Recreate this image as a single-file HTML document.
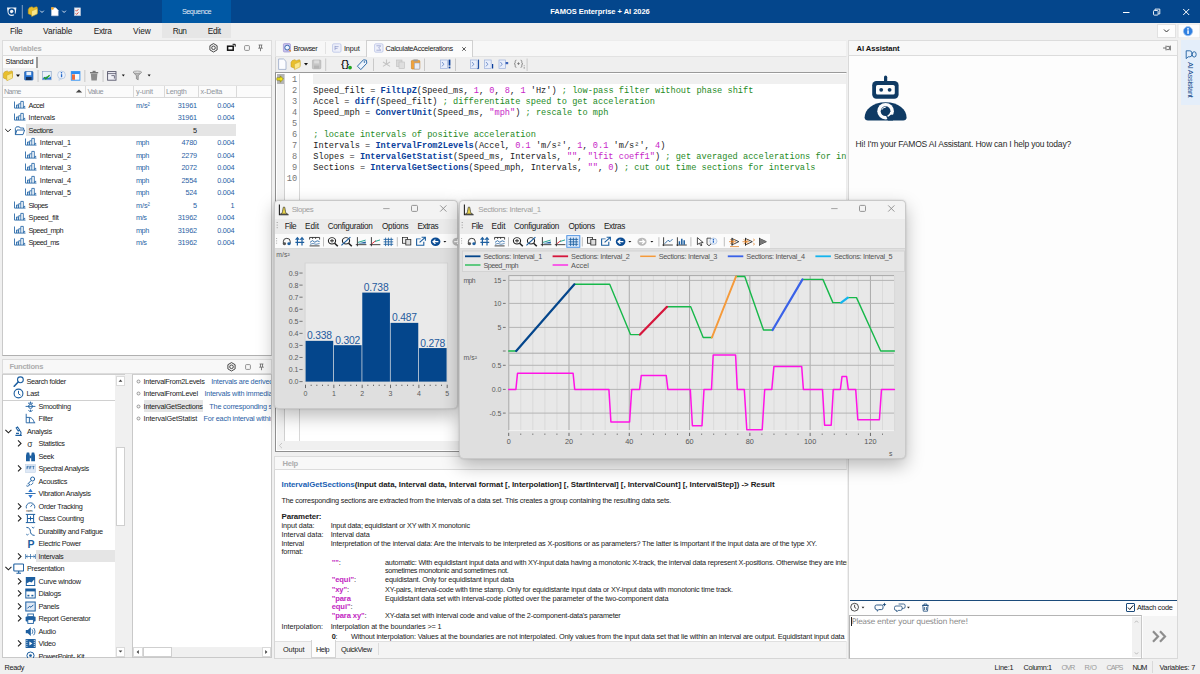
<!DOCTYPE html>
<html lang="en">
<head>
<meta charset="utf-8">
<title>FAMOS Enterprise + AI 2026</title>
<style>
*{box-sizing:border-box;margin:0;padding:0}
html,body{width:1200px;height:674px;overflow:hidden;background:#f0f0f0;font-family:"Liberation Sans",sans-serif;font-size:7.3px;color:#1a1a1a}
#root{position:relative;width:1200px;height:674px;overflow:hidden;background:#f0f0f0}
#root div,#root svg{position:absolute}
.t{white-space:nowrap;line-height:10px;font-size:7.3px;letter-spacing:-0.3px;color:#1a1a1a}
.b{color:#2a5fa5}
.r{text-align:right}
.m{font-size:8.8px;line-height:12px;top:26px;color:#1a1a1a;white-space:nowrap;letter-spacing:-0.25px}
.hdr{background:#f8f8f8;border:1px solid #dcdcdc}
.hdrt{font-size:8px;font-weight:bold;color:#adadad;white-space:nowrap;line-height:11px;letter-spacing:-0.15px}
.w{background:#fff}
.code{font-family:"Liberation Mono",monospace;font-size:8.63px;line-height:11px;white-space:pre;color:#222;left:313px;letter-spacing:0}
.code b{color:#0b3f9c;font-weight:bold}
.code i{color:#c724c7;font-style:normal}
.code u{color:#1e8a1e;text-decoration:none}
.ln{font-family:"Liberation Mono",monospace;font-size:8.63px;line-height:11px;color:#777;left:285px;width:14px;text-align:right}
.wm{font-size:8.3px;line-height:11px;white-space:nowrap;color:#1a1a1a;letter-spacing:-0.15px}
.ax{font-size:7.3px;line-height:9px;color:#555;white-space:nowrap}
.h{font-size:7.6px;line-height:10px;white-space:nowrap;color:#1a1a1a;letter-spacing:-0.17px}
.h b{font-weight:bold}
.pk{color:#c21fc2;font-weight:bold}
</style>
</head>
<body>
<div id="root">
<!-- TITLE BAR -->
<div style="left:0;top:0;width:1200px;height:23px;background:#04468c"></div>
<div style="left:162px;top:0;width:69px;height:23px;background:#0058a4"></div>
<svg style="left:0;top:0" width="100" height="23" viewBox="0 0 100 23">
 <path d="M7 7.400h9.400l-.5 4.400a4.200 4.200 0 0 1-8.400 0z" fill="#eef2f8"/>
 <circle cx="11.700" cy="11.500" r="2.500" fill="none" stroke="#04468c" stroke-width="1.500"/>
 <path d="M12.800 12.600l2.400 2.200" stroke="#04468c" stroke-width="1.400"/>
 <rect x="21.800" y="5" width="1" height="13.500" fill="#7f9fc4"/>
 <path d="M28.2 9.4l1.200-1.800 2.600-.900 1.400 1 3-1 .900.500v5.400l-5.600 2.700-3.500-1.500z" fill="#e9bf2c" stroke="#b8901a" stroke-width=".5"/><path d="M31.5 11.1l5.800-2.500v5.300l-5.600 2.700z" fill="#fbe78a" stroke="#c8a21e" stroke-width=".5"/>
 <path d="M40.200 10.700l1.800 1.800 1.800-1.800" fill="none" stroke="#d7e2f0" stroke-width="1"/>
 <path d="M51.500 7.800h4.300l2.400 2.400v5.600h-6.700z" fill="#fff" stroke="#cfd8e6" stroke-width=".5"/>
 <circle cx="52.400" cy="8.400" r="1.400" fill="#f5a623"/>
 <path d="M62.300 10.700l1.800 1.800 1.800-1.800" fill="none" stroke="#d7e2f0" stroke-width="1"/>
 <rect x="74.300" y="7.800" width="6.400" height="8" fill="#e9edf3" stroke="#9fb2cc" stroke-width=".5"/>
 <path d="M75.600 10.200l1 1 1.800-2M75.600 13.400l1 1 1.800-2" fill="none" stroke="#d03a2b" stroke-width=".9"/>
</svg>
<div style="top:7px;font-size:7.3px;line-height:10px;letter-spacing:-0.472px;white-space:nowrap;left:181.9px;color:#e3ecf6;">Sequence</div>
<div style="top:7px;font-size:7.5px;line-height:10px;letter-spacing:-0.034px;white-space:nowrap;left:550.2px;font-weight:bold;color:#fff;">FAMOS Enterprise + AI 2026</div>
<svg style="left:1110px;top:0" width="90" height="23" viewBox="0 0 90 23">
 <path d="M13 12.500h6.500" stroke="#fff" stroke-width="1"/>
 <rect x="43.500" y="10.500" width="4.600" height="4.600" fill="none" stroke="#fff" stroke-width=".9" rx=".8"/>
 <path d="M45 10.300v-1.200h4.800v4.800h-1.500" fill="none" stroke="#fff" stroke-width=".9"/>
 <path d="M73.200 9l6 6M79.200 9l-6 6" stroke="#fff" stroke-width="1"/>
</svg>
<!-- MENU BAR -->
<div style="left:162px;top:23px;width:69px;height:15px;background:#e6e6e6"></div>
<div style="top:25px;font-size:8.3px;line-height:12px;letter-spacing:-0.218px;white-space:nowrap;left:10px;">File</div>
<div style="top:25px;font-size:8.3px;line-height:12px;letter-spacing:-0.086px;white-space:nowrap;left:43.1px;">Variable</div>
<div style="top:25px;font-size:8.3px;line-height:12px;letter-spacing:-0.304px;white-space:nowrap;left:93.75px;">Extra</div>
<div style="top:25px;font-size:8.3px;line-height:12px;letter-spacing:-0.085px;white-space:nowrap;left:133.1px;">View</div>
<div style="top:25px;font-size:8.3px;line-height:12px;letter-spacing:-0.575px;white-space:nowrap;left:172.75px;">Run</div>
<div style="top:25px;font-size:8.3px;line-height:12px;letter-spacing:-0.363px;white-space:nowrap;left:207.75px;">Edit</div>
<div style="left:1157px;top:24px;width:19px;height:14px;background:#fdfdfd;border:1px solid #e1e1e1"></div>
<svg style="left:1157px;top:24px" width="43" height="14" viewBox="0 0 43 14">
 <path d="M7 5.500l2.500 2.500 2.500-2.500" fill="none" stroke="#333" stroke-width="1"/>
 <rect x="21" y="0" width="22" height="14" fill="#fdfdfd" stroke="#e1e1e1" stroke-width="1"/>
 <circle cx="31" cy="7.200" r="4.600" fill="#2f7fe0" stroke="#9ec3ef" stroke-width=".8"/>
 <rect x="30.300" y="6.300" width="1.500" height="3.600" fill="#fff"/><circle cx="31" cy="4.800" r=".9" fill="#fff"/>
</svg>
<!-- LEFT: VARIABLES PANEL -->
<div style="left:2px;top:40px;width:270px;height:316px;background:#f0f0f0;border:1px solid #d6d6d6"></div>
<div style="left:2px;top:40px;width:270px;height:15.500px;background:#f8f8f8;border:1px solid #dcdcdc"></div>
<div style="top:44px;font-size:7.6px;line-height:10px;letter-spacing:-0.131px;white-space:nowrap;left:9.4px;font-weight:bold;color:#adadad;">Variables</div>
<svg style="left:205px;top:41px" width="65" height="14" viewBox="0 0 65 14"><path d="M8.500 2.600l3.600 2.100v4.200l-3.600 2.100-3.600-2.100V4.700z" fill="none" stroke="#333" stroke-width=".9"/><circle cx="8.500" cy="6.800" r="1.800" fill="none" stroke="#333" stroke-width=".9"/>
 <rect x="22.600" y="5.200" width="5.600" height="4" fill="none" stroke="#111" stroke-width="1.500"/>
 <path d="M27.600 3.300h2.600v2.400" fill="none" stroke="#111" stroke-width="1"/>
 <rect x="39.600" y="4.600" width="4.800" height="4.800" rx=".8" fill="none" stroke="#777" stroke-width=".8"/>
 <path d="M53.600 4h3.800M54.500 4v3M56.500 4v3M53.200 7.200h4.600M55.500 7.200v3" fill="none" stroke="#666" stroke-width=".8"/>
</svg>
<div style="left:3px;top:56px;width:33px;height:12px;background:#fbfbfb"></div>
<div style="left:36.200px;top:57px;width:1.500px;height:11px;background:#9a9a9a"></div>
<div style="top:57px;font-size:7.3px;line-height:10px;letter-spacing:-0.253px;white-space:nowrap;left:5.6px;">Standard</div>
<svg style="left:2px;top:68px" width="160" height="16" viewBox="0 0 160 16">
 <path d="M1.4 5.6l1.200-1.800 2.600-.900 1.400 1 3-1 .900.500v5.400l-5.600 2.700-3.500-1.500z" fill="#e9bf2c" stroke="#b8901a" stroke-width=".5"/><path d="M4.699999999999999 7.3l5.800-2.500v5.300l-5.600 2.700z" fill="#fbe78a" stroke="#c8a21e" stroke-width=".5"/>
 <path d="M14 6.500h4l-2 2.400z" fill="#111"/>
 <rect x="22.600" y="3.500" width="8.400" height="8.600" rx=".8" fill="#2b78d6" stroke="#1a4f97" stroke-width=".6"/>
 <rect x="24.400" y="3.800" width="4.800" height="3.400" fill="#e8f0fb"/><rect x="24" y="9" width="5.600" height="3" fill="#16325c"/>
 <rect x="35.600" y="2" width=".9" height="12" fill="#c4c4c4"/>
 <rect x="40.600" y="3.600" width="8.600" height="8.200" fill="#eaf1fa" stroke="#7d9ac0" stroke-width=".6"/>
 <path d="M40.800 11.600h8.200v-3l-2.400 1.400-2-1.600-3.800 1.600z" fill="#2b78d6"/>
 <path d="M42 9.200l1.800 1.600 3.800-3.600" fill="none" stroke="#22a022" stroke-width="1.400"/>
 <circle cx="59.500" cy="7" r="3.900" fill="#eef3fb" stroke="#a9bfdc" stroke-width=".7"/>
 <path d="M57.500 10.200l-.6 2.200 2.400-1.600z" fill="#eef3fb" stroke="#a9bfdc" stroke-width=".5"/>
 <rect x="58.900" y="6.200" width="1.300" height="3" fill="#2468c8"/><circle cx="59.500" cy="4.800" r=".8" fill="#2468c8"/>
 <rect x="69.300" y="3.600" width="8.600" height="8.600" fill="#f6f8fb" stroke="#2b8cf0" stroke-width=".9"/>
 <rect x="69.300" y="3.600" width="8.600" height="2.400" fill="#2b8cf0"/><rect x="70" y="6.400" width="3" height="5.400" fill="#ea6a3a"/>
 <rect x="82.400" y="2" width=".9" height="12" fill="#c4c4c4"/>
 <path d="M88.800 5.400h6.600l-.6 7h-5.400z" fill="#8c8c8c"/><rect x="88" y="4" width="8.200" height="1.300" fill="#777"/><rect x="90.600" y="2.800" width="3" height="1.200" fill="#777"/>
 <rect x="100.600" y="2" width=".9" height="12" fill="#c4c4c4"/>
 <rect x="105.600" y="3.600" width="8.400" height="8.600" fill="#f0f0f6" stroke="#55556a" stroke-width=".9"/>
 <path d="M105.600 5.600h8.400M109.400 7.600h3v3" fill="none" stroke="#55556a" stroke-width=".8"/>
 <path d="M119.800 6.600h3l-1.500 1.800z" fill="#111"/>
 <path d="M131.200 4.200h8.200l-3.200 3.600v4l-1.800-1v-3z" fill="#b9b9b9" stroke="#6a6a6a" stroke-width=".6"/>
 <ellipse cx="135.300" cy="4.200" rx="4.100" ry="1.200" fill="#e4e4e4" stroke="#6a6a6a" stroke-width=".5"/>
 <path d="M145.600 6.600h3l-1.500 1.800z" fill="#111"/>
</svg>
<div style="left:2px;top:85px;width:270px;height:271px;background:#fff;border:1px solid #c9c9c9;border-top:none;border-bottom:1.500px solid #b0b0b0"></div>
<div style="left:3px;top:85px;width:268px;height:13px;background:#fbfbfb;border-top:1px solid #e3e3e3;border-bottom:1px solid #d9d9d9"></div>
<div style="left:85px;top:86px;width:1.300px;height:11px;background:#dadada"></div>
<div style="left:132.8px;top:86px;width:1.300px;height:11px;background:#dadada"></div>
<div style="left:163.5px;top:86px;width:1.300px;height:11px;background:#dadada"></div>
<div style="left:198px;top:86px;width:1.300px;height:11px;background:#dadada"></div>
<div style="left:236px;top:86px;width:1.300px;height:11px;background:#dadada"></div>
<div style="top:87px;font-size:7.3px;line-height:10px;letter-spacing:-0.718px;white-space:nowrap;left:4px;color:#90959c;">Name</div>
<div style="top:87px;font-size:7.3px;line-height:10px;letter-spacing:-0.506px;white-space:nowrap;left:87.5px;color:#90959c;">Value</div>
<div style="top:87px;font-size:7.3px;line-height:10px;letter-spacing:-0.158px;white-space:nowrap;left:136px;color:#90959c;">y-unit</div>
<div style="top:87px;font-size:7.3px;line-height:10px;letter-spacing:-0.304px;white-space:nowrap;left:166px;color:#90959c;">Length</div>
<div style="top:87px;font-size:7.3px;line-height:10px;letter-spacing:-0.217px;white-space:nowrap;left:200.6px;color:#90959c;">x-Delta</div>
<svg style="left:75px;top:88px" width="8" height="6" viewBox="0 0 8 6"><path d="M.8 4.600L4 1.400l3.200 3.200z" fill="#444"/></svg>
<div style="left:26px;top:124px;width:210px;height:12px;background:#e5e5e5"></div>
<svg style="left:13.9px;top:99.4px" width="13" height="11" viewBox="0 0 13 11"><path d="M.5 2.500v6.600h11M2.500 9V6h1.700v3M4.700 9V4.800h1.900M6.800 9V2.400h2.500V9M9.900 9V7.400h1.300" fill="none" stroke="#2163a5" stroke-width=".85"/></svg>
<div style="top:101px;font-size:7.3px;line-height:10px;letter-spacing:-0.49px;white-space:nowrap;left:28.5px;">Accel</div>
<div style="top:101px;font-size:7.3px;line-height:10px;letter-spacing:-0.047px;white-space:nowrap;left:136px;color:#2a5fa5;">m/s²</div>
<div style="top:101px;font-size:7.3px;line-height:10px;letter-spacing:-0.28px;white-space:nowrap;left:97px;width:99.72px;text-align:right;color:#2a5fa5;">31961</div>
<div style="top:101px;font-size:7.3px;line-height:10px;letter-spacing:-0.28px;white-space:nowrap;left:134.5px;width:99.72px;text-align:right;color:#2a5fa5;">0.004</div>
<svg style="left:13.9px;top:111.4px" width="13" height="11" viewBox="0 0 13 11"><path d="M.5 2.500v6.600h11M2.500 9V6h1.700v3M4.700 9V4.800h1.900M6.800 9V2.400h2.500V9M9.900 9V7.400h1.300" fill="none" stroke="#2163a5" stroke-width=".85"/></svg>
<div style="top:113px;font-size:7.3px;line-height:10px;letter-spacing:-0.11px;white-space:nowrap;left:28.5px;">Intervals</div>
<div style="top:113px;font-size:7.3px;line-height:10px;letter-spacing:-0.28px;white-space:nowrap;left:97px;width:99.72px;text-align:right;color:#2a5fa5;">31961</div>
<div style="top:113px;font-size:7.3px;line-height:10px;letter-spacing:-0.28px;white-space:nowrap;left:134.5px;width:99.72px;text-align:right;color:#2a5fa5;">0.004</div>
<svg style="left:4px;top:124.5px" width="22" height="11" viewBox="0 0 22 11"><path d="M1.200 4l2.800 2.800L6.800 4" fill="none" stroke="#222" stroke-width="1"/><path d="M11.400 9.600V3.400l1-1.600h3l.8 1.200h3.400v1.600M11.400 9.600l1.600-4.600h7.600l-1.600 4.600z" fill="none" stroke="#1d5fa0" stroke-width=".9"/></svg>
<div style="top:126px;font-size:7.3px;line-height:10px;letter-spacing:-0.475px;white-space:nowrap;left:28.5px;">Sections</div>
<div style="top:126px;font-size:7.3px;line-height:10px;letter-spacing:-0.28px;white-space:nowrap;left:97px;width:99.72px;text-align:right;color:#1a1a1a;">5</div>
<svg style="left:25.1px;top:136.4px" width="13" height="11" viewBox="0 0 13 11"><path d="M.5 2.500v6.600h11M2.500 9V6h1.700v3M4.700 9V4.800h1.900M6.800 9V2.400h2.500V9M9.900 9V7.400h1.300" fill="none" stroke="#2163a5" stroke-width=".85"/></svg>
<div style="top:138px;font-size:7.3px;line-height:10px;letter-spacing:-0.096px;white-space:nowrap;left:39.8px;">Interval_1</div>
<div style="top:138px;font-size:7.3px;line-height:10px;letter-spacing:-0.483px;white-space:nowrap;left:136px;color:#2a5fa5;">mph</div>
<div style="top:138px;font-size:7.3px;line-height:10px;letter-spacing:-0.28px;white-space:nowrap;left:97px;width:99.72px;text-align:right;color:#2a5fa5;">4780</div>
<div style="top:138px;font-size:7.3px;line-height:10px;letter-spacing:-0.28px;white-space:nowrap;left:134.5px;width:99.72px;text-align:right;color:#2a5fa5;">0.004</div>
<svg style="left:25.1px;top:149.4px" width="13" height="11" viewBox="0 0 13 11"><path d="M.5 2.500v6.600h11M2.500 9V6h1.700v3M4.700 9V4.800h1.900M6.800 9V2.400h2.500V9M9.900 9V7.400h1.300" fill="none" stroke="#2163a5" stroke-width=".85"/></svg>
<div style="top:151px;font-size:7.3px;line-height:10px;letter-spacing:-0.096px;white-space:nowrap;left:39.8px;">Interval_2</div>
<div style="top:151px;font-size:7.3px;line-height:10px;letter-spacing:-0.483px;white-space:nowrap;left:136px;color:#2a5fa5;">mph</div>
<div style="top:151px;font-size:7.3px;line-height:10px;letter-spacing:-0.28px;white-space:nowrap;left:97px;width:99.72px;text-align:right;color:#2a5fa5;">2279</div>
<div style="top:151px;font-size:7.3px;line-height:10px;letter-spacing:-0.28px;white-space:nowrap;left:134.5px;width:99.72px;text-align:right;color:#2a5fa5;">0.004</div>
<svg style="left:25.1px;top:161.4px" width="13" height="11" viewBox="0 0 13 11"><path d="M.5 2.500v6.600h11M2.500 9V6h1.700v3M4.700 9V4.800h1.900M6.800 9V2.400h2.500V9M9.900 9V7.400h1.300" fill="none" stroke="#2163a5" stroke-width=".85"/></svg>
<div style="top:163px;font-size:7.3px;line-height:10px;letter-spacing:-0.096px;white-space:nowrap;left:39.8px;">Interval_3</div>
<div style="top:163px;font-size:7.3px;line-height:10px;letter-spacing:-0.483px;white-space:nowrap;left:136px;color:#2a5fa5;">mph</div>
<div style="top:163px;font-size:7.3px;line-height:10px;letter-spacing:-0.28px;white-space:nowrap;left:97px;width:99.72px;text-align:right;color:#2a5fa5;">2072</div>
<div style="top:163px;font-size:7.3px;line-height:10px;letter-spacing:-0.28px;white-space:nowrap;left:134.5px;width:99.72px;text-align:right;color:#2a5fa5;">0.004</div>
<svg style="left:25.1px;top:174.4px" width="13" height="11" viewBox="0 0 13 11"><path d="M.5 2.500v6.600h11M2.500 9V6h1.700v3M4.700 9V4.800h1.900M6.800 9V2.400h2.500V9M9.900 9V7.400h1.300" fill="none" stroke="#2163a5" stroke-width=".85"/></svg>
<div style="top:176px;font-size:7.3px;line-height:10px;letter-spacing:-0.096px;white-space:nowrap;left:39.8px;">Interval_4</div>
<div style="top:176px;font-size:7.3px;line-height:10px;letter-spacing:-0.483px;white-space:nowrap;left:136px;color:#2a5fa5;">mph</div>
<div style="top:176px;font-size:7.3px;line-height:10px;letter-spacing:-0.28px;white-space:nowrap;left:97px;width:99.72px;text-align:right;color:#2a5fa5;">2554</div>
<div style="top:176px;font-size:7.3px;line-height:10px;letter-spacing:-0.28px;white-space:nowrap;left:134.5px;width:99.72px;text-align:right;color:#2a5fa5;">0.004</div>
<svg style="left:25.1px;top:186.4px" width="13" height="11" viewBox="0 0 13 11"><path d="M.5 2.500v6.600h11M2.500 9V6h1.700v3M4.700 9V4.800h1.900M6.800 9V2.400h2.500V9M9.900 9V7.400h1.300" fill="none" stroke="#2163a5" stroke-width=".85"/></svg>
<div style="top:188px;font-size:7.3px;line-height:10px;letter-spacing:-0.096px;white-space:nowrap;left:39.8px;">Interval_5</div>
<div style="top:188px;font-size:7.3px;line-height:10px;letter-spacing:-0.483px;white-space:nowrap;left:136px;color:#2a5fa5;">mph</div>
<div style="top:188px;font-size:7.3px;line-height:10px;letter-spacing:-0.28px;white-space:nowrap;left:97px;width:99.72px;text-align:right;color:#2a5fa5;">524</div>
<div style="top:188px;font-size:7.3px;line-height:10px;letter-spacing:-0.28px;white-space:nowrap;left:134.5px;width:99.72px;text-align:right;color:#2a5fa5;">0.004</div>
<svg style="left:13.9px;top:199.4px" width="13" height="11" viewBox="0 0 13 11"><path d="M.5 2.500v6.600h11M2.500 9V6h1.700v3M4.700 9V4.800h1.900M6.800 9V2.400h2.500V9M9.900 9V7.400h1.300" fill="none" stroke="#2163a5" stroke-width=".85"/></svg>
<div style="top:201px;font-size:7.3px;line-height:10px;letter-spacing:-0.553px;white-space:nowrap;left:28.5px;">Slopes</div>
<div style="top:201px;font-size:7.3px;line-height:10px;letter-spacing:-0.047px;white-space:nowrap;left:136px;color:#2a5fa5;">m/s²</div>
<div style="top:201px;font-size:7.3px;line-height:10px;letter-spacing:-0.28px;white-space:nowrap;left:97px;width:99.72px;text-align:right;color:#2a5fa5;">5</div>
<div style="top:201px;font-size:7.3px;line-height:10px;letter-spacing:-0.28px;white-space:nowrap;left:134.5px;width:99.72px;text-align:right;color:#2a5fa5;">1</div>
<svg style="left:13.9px;top:211.4px" width="13" height="11" viewBox="0 0 13 11"><path d="M.5 2.500v6.600h11M2.500 9V6h1.700v3M4.700 9V4.800h1.900M6.800 9V2.400h2.500V9M9.900 9V7.400h1.300" fill="none" stroke="#2163a5" stroke-width=".85"/></svg>
<div style="top:213px;font-size:7.3px;line-height:10px;letter-spacing:-0.237px;white-space:nowrap;left:28.5px;">Speed_filt</div>
<div style="top:213px;font-size:7.3px;line-height:10px;letter-spacing:-0.386px;white-space:nowrap;left:136px;color:#2a5fa5;">m/s</div>
<div style="top:213px;font-size:7.3px;line-height:10px;letter-spacing:-0.28px;white-space:nowrap;left:97px;width:99.72px;text-align:right;color:#2a5fa5;">31962</div>
<div style="top:213px;font-size:7.3px;line-height:10px;letter-spacing:-0.28px;white-space:nowrap;left:134.5px;width:99.72px;text-align:right;color:#2a5fa5;">0.004</div>
<svg style="left:13.9px;top:224.4px" width="13" height="11" viewBox="0 0 13 11"><path d="M.5 2.500v6.600h11M2.500 9V6h1.700v3M4.700 9V4.800h1.900M6.800 9V2.400h2.500V9M9.900 9V7.400h1.300" fill="none" stroke="#2163a5" stroke-width=".85"/></svg>
<div style="top:226px;font-size:7.3px;line-height:10px;letter-spacing:-0.53px;white-space:nowrap;left:28.5px;">Speed_mph</div>
<div style="top:226px;font-size:7.3px;line-height:10px;letter-spacing:-0.483px;white-space:nowrap;left:136px;color:#2a5fa5;">mph</div>
<div style="top:226px;font-size:7.3px;line-height:10px;letter-spacing:-0.28px;white-space:nowrap;left:97px;width:99.72px;text-align:right;color:#2a5fa5;">31962</div>
<div style="top:226px;font-size:7.3px;line-height:10px;letter-spacing:-0.28px;white-space:nowrap;left:134.5px;width:99.72px;text-align:right;color:#2a5fa5;">0.004</div>
<svg style="left:13.9px;top:236.4px" width="13" height="11" viewBox="0 0 13 11"><path d="M.5 2.500v6.600h11M2.500 9V6h1.700v3M4.700 9V4.800h1.900M6.800 9V2.400h2.500V9M9.900 9V7.400h1.300" fill="none" stroke="#2163a5" stroke-width=".85"/></svg>
<div style="top:238px;font-size:7.3px;line-height:10px;letter-spacing:-0.562px;white-space:nowrap;left:28.5px;">Speed_ms</div>
<div style="top:238px;font-size:7.3px;line-height:10px;letter-spacing:-0.386px;white-space:nowrap;left:136px;color:#2a5fa5;">m/s</div>
<div style="top:238px;font-size:7.3px;line-height:10px;letter-spacing:-0.28px;white-space:nowrap;left:97px;width:99.72px;text-align:right;color:#2a5fa5;">31962</div>
<div style="top:238px;font-size:7.3px;line-height:10px;letter-spacing:-0.28px;white-space:nowrap;left:134.5px;width:99.72px;text-align:right;color:#2a5fa5;">0.004</div>
<!-- LEFT: FUNCTIONS PANEL -->
<div style="left:2px;top:358.500px;width:270px;height:299.500px;background:#f0f0f0;border:1px solid #d6d6d6"></div>
<div style="left:2px;top:358.500px;width:270px;height:15.500px;background:#f8f8f8;border:1px solid #dcdcdc"></div>
<div style="top:362px;font-size:7.6px;line-height:10px;letter-spacing:-0.289px;white-space:nowrap;left:9.4px;font-weight:bold;color:#adadad;">Functions</div>
<svg style="left:222.800px;top:359.500px" width="48" height="14" viewBox="0 0 48 14"><path d="M8.500 2.600l3.600 2.100v4.200l-3.600 2.100-3.600-2.100V4.700z" fill="none" stroke="#333" stroke-width=".9"/><circle cx="8.500" cy="6.800" r="1.800" fill="none" stroke="#333" stroke-width=".9"/>
 <rect x="22.600" y="4.600" width="4.800" height="4.800" rx=".8" fill="none" stroke="#777" stroke-width=".8"/>
 <path d="M36.600 4h3.800M37.500 4v3M39.500 4v3M36.200 7.200h4.600M38.500 7.200v3" fill="none" stroke="#666" stroke-width=".8"/>
</svg>
<div style="left:2px;top:374px;width:123px;height:284px;background:#fff;border:1px solid #c9c9c9;border-top:1px solid #cfcfcf"></div>
<div style="left:3px;top:399.500px;width:112px;height:1.300px;background:#d0d0d0"></div>
<div style="left:115px;top:375px;width:9.500px;height:282px;background:#f0f0f0"></div>
<div style="left:115.500px;top:375.500px;width:9px;height:10px;background:#fff;border:1px solid #dadada"></div>
<div style="left:115.500px;top:446.500px;width:9px;height:79.500px;background:#fff;border:1px solid #cfcfcf"></div>
<div style="left:115.500px;top:646.500px;width:9px;height:10px;background:#fff;border:1px solid #dadada"></div>
<svg style="left:115.500px;top:376px" width="9" height="281" viewBox="0 0 9 281"><path d="M2.600 5.800L4.500 3.600l1.900 2.200z" fill="#444"/><path d="M2.600 274.400l1.900 2.200 1.900-2.200z" fill="#444"/></svg>
<div style="left:36px;top:550px;width:78.500px;height:12px;background:#e5e5e5"></div>
<div style="left:3px;top:375px;width:112px;height:282.500px;overflow:hidden">
<svg style="left:10.4px;top:0.5px" width="11" height="11" viewBox="0 0 11 11"><circle cx="7.400" cy="3.800" r="2.900" stroke="#1d5fa0" fill="none" stroke-width="1.100"/><path d="M5.200 6L1.200 10.200" stroke="#1d5fa0" stroke-width="1.600" stroke-linecap="round"/></svg>
<div style="top:2px;font-size:7.3px;line-height:10px;letter-spacing:-0.3px;white-space:nowrap;left:23.5px;">Search folder</div>
<svg style="left:10.4px;top:13.0px" width="11" height="11" viewBox="0 0 11 11"><circle cx="5.500" cy="5.500" r="4.400" stroke="#1d5fa0" fill="none" stroke-width="1.100"/><path d="M5.500 2.800v3l2 1.400" stroke="#1d5fa0" fill="none" stroke-width="1"/></svg>
<div style="top:14px;font-size:7.3px;line-height:10px;letter-spacing:-0.3px;white-space:nowrap;left:23.5px;">Last</div>
<svg style="left:21.6px;top:25.5px" width="11" height="11" viewBox="0 0 11 11"><circle cx="5.500" cy="5.400" r="2" stroke="#1d5fa0" fill="none" stroke-width=".9"/><path d="M.6 5.400h9.800M5.500 .6v1.600M5.500 8.600v2M3 2.200h5M3.400 9.400l2.100 1.400 2.100-1.400" stroke="#1d5fa0" fill="none" stroke-width=".9"/></svg>
<div style="top:27px;font-size:7.3px;line-height:10px;letter-spacing:-0.3px;white-space:nowrap;left:35.5px;">Smoothing</div>
<svg style="left:21.6px;top:38.0px" width="11" height="11" viewBox="0 0 11 11"><path d="M1.200 .8v9h9M1.200 4.400h3.200c2.400 0 4.200 2.600 5 5.400M4.400 4.400v5.400" stroke="#1d5fa0" fill="none" stroke-width=".9"/></svg>
<div style="top:39px;font-size:7.3px;line-height:10px;letter-spacing:-0.3px;white-space:nowrap;left:35.5px;">Filter</div>
<svg style="left:1.2000000000000002px;top:52.5px" width="9" height="7" viewBox="0 0 9 7"><path d="M1.400 1.800l3 3 3-3" fill="none" stroke="#222" stroke-width="1.100"/></svg>
<svg style="left:10.4px;top:50.5px" width="11" height="11" viewBox="0 0 11 11"><path d="M4.600 1l2 3-1.400 1-2-3zM6.600 4.600c1.600 1 2 3 .6 4.600M2.400 9.400h6.400M3 7.400h3" stroke="#1d5fa0" fill="none" stroke-width="1.100"/></svg>
<div style="top:52px;font-size:7.3px;line-height:10px;letter-spacing:-0.3px;white-space:nowrap;left:24px;">Analysis</div>
<svg style="left:12.7px;top:64.0px" width="7" height="9" viewBox="0 0 7 9"><path d="M2 1.400l3 3-3 3" fill="none" stroke="#222" stroke-width="1.100"/></svg>
<svg style="left:21.6px;top:63.0px" width="11" height="11" viewBox="0 0 11 11"><text x="2.200" y="8.600" font-family="Liberation Sans,sans-serif" font-size="8.500" fill="#333">σ</text></svg>
<div style="top:64px;font-size:7.3px;line-height:10px;letter-spacing:-0.3px;white-space:nowrap;left:35.5px;">Statistics</div>
<svg style="left:21.6px;top:75.5px" width="11" height="11" viewBox="0 0 11 11"><path d="M1 4.400l.8-3h2.400l.6 3v5.800H1zM6.200 4.400l.6-3h2.400l.8 3v5.800H6.200z" fill="#1d5fa0"/><rect x="4.400" y="4.600" width="2.200" height="2.600" fill="#1d5fa0"/></svg>
<div style="top:77px;font-size:7.3px;line-height:10px;letter-spacing:-0.3px;white-space:nowrap;left:35.5px;">Seek</div>
<svg style="left:12.7px;top:89.0px" width="7" height="9" viewBox="0 0 7 9"><path d="M2 1.400l3 3-3 3" fill="none" stroke="#222" stroke-width="1.100"/></svg>
<svg style="left:21.6px;top:88.0px" width="11" height="11" viewBox="0 0 11 11"><rect x=".6" y="1.600" width="9.800" height="7.800" fill="#dfe9f6" stroke="#b7cbe4" stroke-width=".5"/><path d="M2 3.400h1.800M2 3.200v3M2 4.800h1.400M4.800 3.400h1.800M4.800 3.200v3M4.800 4.800h1.400M7.400 3.400h2M8.400 3.400v2.800" stroke="#1d5fa0" stroke-width=".7" fill="none"/></svg>
<div style="top:89px;font-size:7.3px;line-height:10px;letter-spacing:-0.3px;white-space:nowrap;left:35.5px;">Spectral Analysis</div>
<svg style="left:21.6px;top:100.5px" width="11" height="11" viewBox="0 0 11 11"><circle cx="7.600" cy="3" r="2" stroke="#1d5fa0" fill="none" stroke-width="1"/><path d="M6 4.600L2.600 8.200M1.400 9.800c1.400 1 3.400 0 3-2M5.600 8.800c1.200-.2 2-1 2.400-2.200" stroke="#1d5fa0" fill="none" stroke-width="1"/></svg>
<div style="top:102px;font-size:7.3px;line-height:10px;letter-spacing:-0.3px;white-space:nowrap;left:35.5px;">Acoustics</div>
<svg style="left:21.6px;top:113.0px" width="11" height="11" viewBox="0 0 11 11"><path d="M.4 5.500h10.200" stroke="#1d5fa0" stroke-width=".9"/><path d="M5.500 .8l2.200 3.200H3.300zM5.500 10.200l2.200-3.200H3.300z" fill="#2b78d6"/></svg>
<div style="top:114px;font-size:7.3px;line-height:10px;letter-spacing:-0.3px;white-space:nowrap;left:35.5px;">Vibration Analysis</div>
<svg style="left:12.7px;top:126.5px" width="7" height="9" viewBox="0 0 7 9"><path d="M2 1.400l3 3-3 3" fill="none" stroke="#222" stroke-width="1.100"/></svg>
<svg style="left:21.6px;top:125.5px" width="11" height="11" viewBox="0 0 11 11"><path d="M1.400 7.400a4.300 4.300 0 1 1 8.200 0M5.500 5.800l2-2.400" stroke="#1d5fa0" fill="none" stroke-width=".9"/><text x="1.200" y="11" font-family="Liberation Sans,sans-serif" font-size="3.800" fill="#333">rpm</text></svg>
<div style="top:127px;font-size:7.3px;line-height:10px;letter-spacing:-0.3px;white-space:nowrap;left:35.5px;">Order Tracking</div>
<svg style="left:12.7px;top:139.0px" width="7" height="9" viewBox="0 0 7 9"><path d="M2 1.400l3 3-3 3" fill="none" stroke="#222" stroke-width="1.100"/></svg>
<svg style="left:21.6px;top:138.0px" width="11" height="11" viewBox="0 0 11 11"><path d="M.8 1.400h9.400M.8 9.600h9.400M2.400 1.400v8.200M8.600 1.400v8.200M2.400 5.500h6.200M5.500 3.400v4.200" stroke="#1d5fa0" fill="none" stroke-width="1"/></svg>
<div style="top:139px;font-size:7.3px;line-height:10px;letter-spacing:-0.3px;white-space:nowrap;left:35.5px;">Class Counting</div>
<svg style="left:21.6px;top:150.5px" width="11" height="11" viewBox="0 0 11 11"><path d="M1.400 1.400c3 0 4 2 4 4s1.400 4 4.200 4" stroke="#1d5fa0" fill="none" stroke-width="1"/><path d="M7 .8l1 1.400 1.400-1M1.200 8l1.200 1.200 1.200-1.400" stroke="#1d5fa0" fill="none" stroke-width=".8"/></svg>
<div style="top:152px;font-size:7.3px;line-height:10px;letter-spacing:-0.3px;white-space:nowrap;left:35.5px;">Durability and Fatigue</div>
<svg style="left:21.6px;top:163.0px" width="11" height="11" viewBox="0 0 11 11"><text x="2.400" y="9.600" font-family="Liberation Sans,sans-serif" font-weight="bold" font-size="10.500" fill="#1d5fa0">P</text></svg>
<div style="top:164px;font-size:7.3px;line-height:10px;letter-spacing:-0.3px;white-space:nowrap;left:35.5px;">Electric Power</div>
<svg style="left:12.7px;top:176.5px" width="7" height="9" viewBox="0 0 7 9"><path d="M2 1.400l3 3-3 3" fill="none" stroke="#222" stroke-width="1.100"/></svg>
<svg style="left:21.6px;top:175.5px" width="11" height="11" viewBox="0 0 11 11"><path d="M.6 3v5M10.400 3v5M5.500 3v5M.8 5.500h9.400M2.600 4.200L1.200 5.500l1.400 1.300M8.400 4.200l1.400 1.300-1.400 1.300" stroke="#1d5fa0" fill="none" stroke-width=".8" opacity=".85"/></svg>
<div style="top:177px;font-size:7.3px;line-height:10px;letter-spacing:-0.3px;white-space:nowrap;left:35.5px;">Intervals</div>
<svg style="left:1.2000000000000002px;top:190.0px" width="9" height="7" viewBox="0 0 9 7"><path d="M1.400 1.800l3 3 3-3" fill="none" stroke="#222" stroke-width="1.100"/></svg>
<svg style="left:10.4px;top:188.0px" width="11" height="11" viewBox="0 0 11 11"><rect x=".8" y="1" width="9.800" height="7" rx=".8" stroke="#1d5fa0" fill="none" stroke-width="1.100"/><path d="M3.400 10.200h4.600M5.700 8v2.200" stroke="#1d5fa0" fill="none" stroke-width="1.100"/></svg>
<div style="top:189px;font-size:7.3px;line-height:10px;letter-spacing:-0.3px;white-space:nowrap;left:24px;">Presentation</div>
<svg style="left:12.7px;top:201.5px" width="7" height="9" viewBox="0 0 7 9"><path d="M2 1.400l3 3-3 3" fill="none" stroke="#222" stroke-width="1.100"/></svg>
<svg style="left:21.6px;top:200.5px" width="11" height="11" viewBox="0 0 11 11"><rect x=".8" y="1" width="9.400" height="9" fill="#1d5fa0"/><path d="M1.800 7.200l2.800-1.400 2 .6 2.600-3v5.600H1.800z" fill="#fff"/></svg>
<div style="top:202px;font-size:7.3px;line-height:10px;letter-spacing:-0.3px;white-space:nowrap;left:35.5px;">Curve window</div>
<svg style="left:12.7px;top:214.0px" width="7" height="9" viewBox="0 0 7 9"><path d="M2 1.400l3 3-3 3" fill="none" stroke="#222" stroke-width="1.100"/></svg>
<svg style="left:21.6px;top:213.0px" width="11" height="11" viewBox="0 0 11 11"><rect x=".8" y="1" width="9.400" height="9" stroke="#1d5fa0" fill="none" stroke-width="1"/><rect x=".8" y="1" width="9.400" height="2.400" fill="#1d5fa0"/><rect x="2.400" y="6.800" width="2" height="1.600" fill="#1d5fa0"/><rect x="6.400" y="6.800" width="2" height="1.600" fill="#1d5fa0"/></svg>
<div style="top:214px;font-size:7.3px;line-height:10px;letter-spacing:-0.3px;white-space:nowrap;left:35.5px;">Dialogs</div>
<svg style="left:12.7px;top:226.5px" width="7" height="9" viewBox="0 0 7 9"><path d="M2 1.400l3 3-3 3" fill="none" stroke="#222" stroke-width="1.100"/></svg>
<svg style="left:21.6px;top:225.5px" width="11" height="11" viewBox="0 0 11 11"><rect x=".8" y="1" width="9.400" height="9" fill="#dfe9f6" stroke="#1d5fa0" stroke-width="1"/><path d="M2.400 7.400l2-2 1.600.8 2.400-2.400" stroke="#1d5fa0" fill="none" stroke-width="1"/></svg>
<div style="top:227px;font-size:7.3px;line-height:10px;letter-spacing:-0.3px;white-space:nowrap;left:35.5px;">Panels</div>
<svg style="left:12.7px;top:239.0px" width="7" height="9" viewBox="0 0 7 9"><path d="M2 1.400l3 3-3 3" fill="none" stroke="#222" stroke-width="1.100"/></svg>
<svg style="left:21.6px;top:238.0px" width="11" height="11" viewBox="0 0 11 11"><rect x=".6" y="3.600" width="10" height="5" rx="1" fill="#1d5fa0"/><rect x="2.800" y="1" width="5.600" height="2.600" fill="#fff" stroke="#1d5fa0" stroke-width=".9"/><rect x="2.800" y="6.600" width="5.600" height="3.800" fill="#fff" stroke="#1d5fa0" stroke-width=".9"/></svg>
<div style="top:239px;font-size:7.3px;line-height:10px;letter-spacing:-0.3px;white-space:nowrap;left:35.5px;">Report Generator</div>
<svg style="left:21.6px;top:250.5px" width="11" height="11" viewBox="0 0 11 11"><path d="M.8 4h2l3-2.800v8.800l-3-2.800h-2z" fill="#1d5fa0"/><path d="M7 3.400c1 1.200 1 3.200 0 4.400M8.600 2c1.800 2 1.800 5.200 0 7.200" stroke="#1d5fa0" fill="none" stroke-width=".9"/></svg>
<div style="top:252px;font-size:7.3px;line-height:10px;letter-spacing:-0.3px;white-space:nowrap;left:35.5px;">Audio</div>
<svg style="left:12.7px;top:264.0px" width="7" height="9" viewBox="0 0 7 9"><path d="M2 1.400l3 3-3 3" fill="none" stroke="#222" stroke-width="1.100"/></svg>
<svg style="left:21.6px;top:263.0px" width="11" height="11" viewBox="0 0 11 11"><rect x=".6" y="1" width="10" height="9" fill="#1d5fa0"/><path d="M4.400 3.400l3 2.100-3 2.100z" fill="#fff"/><path d="M1.400 2.400h1M1.400 4.400h1M1.400 6.400h1M1.400 8.400h1M8.800 2.400h1M8.800 4.400h1M8.800 6.400h1M8.800 8.400h1" stroke="#fff" stroke-width=".9"/></svg>
<div style="top:264px;font-size:7.3px;line-height:10px;letter-spacing:-0.3px;white-space:nowrap;left:35.5px;">Video</div>
<svg style="left:21.6px;top:275.5px" width="11" height="11" viewBox="0 0 11 11"><circle cx="5.500" cy="4.600" r="3.600" stroke="#1d5fa0" fill="none" stroke-width="1"/><circle cx="5.500" cy="4.600" r="1.400" fill="#1d5fa0"/><path d="M1 10.400h9" stroke="#1d5fa0" fill="none" stroke-width="1"/></svg>
<div style="top:277px;font-size:7.3px;line-height:10px;letter-spacing:-0.3px;white-space:nowrap;left:35.5px;">PowerPoint- Kit</div>
</div>
<div style="left:132px;top:374px;width:140px;height:284px;background:#fff;border:1px solid #c9c9c9;border-top:1px solid #cfcfcf"></div>
<div style="left:143.500px;top:400px;width:59.500px;height:12px;background:#e5e5e5"></div>
<div style="left:133px;top:375px;width:138px;height:60px;overflow:hidden">
<svg style="left:2.500px;top:3.5px" width="5" height="5" viewBox="0 0 5 5"><circle cx="2.500" cy="2.500" r="1.500" fill="#f4f4f4" stroke="#777" stroke-width=".7"/></svg>
<div style="top:2px;font-size:7.3px;line-height:10px;letter-spacing:-0.27px;white-space:nowrap;left:10.599999999999994px;">IntervalFrom2Levels</div>
<div style="top:2px;font-size:7.3px;line-height:10px;letter-spacing:-0.2px;white-space:nowrap;left:78.19999999999999px;color:#2a5fa5;">Intervals are derived from the curve</div>
<svg style="left:2.500px;top:16.0px" width="5" height="5" viewBox="0 0 5 5"><circle cx="2.500" cy="2.500" r="1.500" fill="#f4f4f4" stroke="#777" stroke-width=".7"/></svg>
<div style="top:14px;font-size:7.3px;line-height:10px;letter-spacing:-0.248px;white-space:nowrap;left:10.599999999999994px;">IntervalFromLevel</div>
<div style="top:14px;font-size:7.3px;line-height:10px;letter-spacing:-0.2px;white-space:nowrap;left:71.5px;color:#2a5fa5;">Intervals with immediate effect</div>
<svg style="left:2.500px;top:28.5px" width="5" height="5" viewBox="0 0 5 5"><circle cx="2.500" cy="2.500" r="1.500" fill="#f4f4f4" stroke="#777" stroke-width=".7"/></svg>
<div style="top:27px;font-size:7.3px;line-height:10px;letter-spacing:-0.237px;white-space:nowrap;left:10.599999999999994px;">IntervalGetSections</div>
<div style="top:27px;font-size:7.3px;line-height:10px;letter-spacing:-0.2px;white-space:nowrap;left:76.30000000000001px;color:#2a5fa5;">The corresponding sections are</div>
<svg style="left:2.500px;top:41.0px" width="5" height="5" viewBox="0 0 5 5"><circle cx="2.500" cy="2.500" r="1.500" fill="#f4f4f4" stroke="#777" stroke-width=".7"/></svg>
<div style="top:39px;font-size:7.3px;line-height:10px;letter-spacing:-0.138px;white-space:nowrap;left:10.599999999999994px;">IntervalGetStatist</div>
<div style="top:39px;font-size:7.3px;line-height:10px;letter-spacing:-0.2px;white-space:nowrap;left:70.6px;color:#2a5fa5;">For each interval within the data</div>
</div>
<div style="left:133px;top:647px;width:138px;height:10px;background:#f0f0f0"></div>
<div style="left:133px;top:647px;width:9.500px;height:10px;background:#fff;border:1px solid #dadada"></div>
<div style="left:142.500px;top:647px;width:29px;height:10px;background:#fff;border:1px solid #cfcfcf"></div>
<div style="left:261.500px;top:647px;width:9.500px;height:10px;background:#fff;border:1px solid #dadada"></div>
<svg style="left:133px;top:647px" width="138" height="10" viewBox="0 0 138 10"><path d="M5.800 3.100L3.600 5l2.200 1.900z" fill="#444"/><path d="M132.200 3.100l2.200 1.900-2.200 1.900z" fill="#444"/></svg>
<!-- CENTER: TABS + EDITOR -->
<div style="left:275px;top:40px;width:572px;height:17px;background:#f7f7f7;border:1px solid #e2e2e2;border-top-color:#ececec;border-right-color:#efefef"></div>
<div style="left:366.300px;top:40px;width:107.200px;height:17px;background:#fbfbfb;border:1px solid #d0d0d0;border-bottom:none"></div>
<div style="left:325px;top:42px;width:1px;height:12px;background:#e2e2e2"></div>
<svg style="left:282px;top:42px" width="110" height="13" viewBox="0 0 110 13">
 <rect x="1.400" y="1.600" width="7" height="8.400" rx="1" fill="#c9c3ec" stroke="#8f87cf" stroke-width=".6"/>
 <circle cx="5.200" cy="5.600" r="2.400" fill="#eef6ff" stroke="#2d5fa8" stroke-width=".9"/><path d="M7 7.600l1.800 1.800" stroke="#e58a1f" stroke-width="1.300"/>
 <rect x="50.600" y="1.800" width="8.400" height="8.400" rx="1.200" fill="#eef0fa" stroke="#b9c3e6" stroke-width=".8"/>
 <path d="M53 3.800v4.400M53 4.600h3.600M53 6.400h2.600" stroke="#8b97c9" stroke-width=".7" fill="none"/>
 <rect x="92.600" y="1.800" width="8.400" height="8.400" rx="1.200" fill="#eef0fa" stroke="#b9c3e6" stroke-width=".8"/>
 <path d="M94.400 3.800h4.400l-2.200 2.200 2.200 2.200h-4.400" stroke="#8b97c9" stroke-width=".7" fill="none"/>
</svg>
<div style="top:44px;font-size:7.3px;line-height:10px;letter-spacing:-0.453px;white-space:nowrap;left:293.6px;">Browser</div>
<div style="top:44px;font-size:7.3px;line-height:10px;letter-spacing:-0.107px;white-space:nowrap;left:343.9px;">Input</div>
<div style="top:44px;font-size:7.3px;line-height:10px;letter-spacing:-0.311px;white-space:nowrap;left:385.5px;">CalculateAccelerations</div>
<svg style="left:460px;top:44.600px" width="8" height="8" viewBox="0 0 8 8"><path d="M2.200 2.200l3.600 3.600M5.800 2.200l-3.600 3.600" stroke="#333" stroke-width=".8"/></svg>
<div style="left:275px;top:56.500px;width:572px;height:15.500px;background:#efefef;border-left:1px solid #d4d4d4"></div>
<svg style="left:274px;top:57px" width="260" height="15" viewBox="0 0 260 15">
 <path d="M4.600 2h5l2.400 2.400v8H4.600z" fill="#fbfcff" stroke="#8e9fc2" stroke-width=".7"/>
 <path d="M17 5.4l1.200-1.800 2.600-.900 1.400 1 3-1 .900.500v5.400l-5.600 2.700-3.500-1.500z" fill="#e9bf2c" stroke="#b8901a" stroke-width=".5"/><path d="M20.3 7.1000000000000005l5.800-2.500v5.300l-5.600 2.700z" fill="#fbe78a" stroke="#c8a21e" stroke-width=".5"/>
 <path d="M30 6h4l-2 2.400z" fill="#111"/>
 <rect x="38.400" y="3" width="8.400" height="8.800" rx=".8" fill="#c6c6c6" stroke="#adadad" stroke-width=".6"/><rect x="40.200" y="3.400" width="4.800" height="3" fill="#dcdcdc"/><rect x="40" y="8.600" width="5.200" height="3" fill="#b4b4b4"/>
 <rect x="51.200" y="1.500" width="1" height="12.500" fill="#c9c9c9"/>
 <text x="66.500" y="10.200" font-family="Liberation Mono,monospace" font-weight="bold" font-size="8.500" fill="#111" letter-spacing="-1">{}</text>
 <circle cx="76" cy="10.600" r="1.900" fill="#1ea51e"/>
 <path d="M83.400 9.200l6-6.400 3 .4.400 3-6 6.400z" fill="#eef4fc" stroke="#1d5fa0" stroke-width=".9"/><circle cx="90.400" cy="5" r=".8" fill="#1d5fa0"/>
 <rect x="99" y="1.500" width="1" height="12.500" fill="#c9c9c9"/>
 <path d="M109 5l7 4.400M116 5l-7 4.400M112.500 2.600v4" stroke="#c4c4c4" stroke-width="1.100" fill="none"/>
 <rect x="122.600" y="3" width="5.400" height="6.600" fill="#d9d9d9" stroke="#bdbdbd" stroke-width=".6"/><rect x="125" y="5" width="5.400" height="6.600" fill="#dedede" stroke="#bdbdbd" stroke-width=".6"/>
 <rect x="137.400" y="3.400" width="8.400" height="8.600" rx=".8" fill="#f0a23c" stroke="#c77f21" stroke-width=".6"/><rect x="139.400" y="2.400" width="4.400" height="2" fill="#9c9c9c"/><rect x="140.400" y="6" width="5.400" height="6" fill="#e9edf6" stroke="#93a0bd" stroke-width=".5"/>
 <rect x="150" y="1.500" width="1" height="12.500" fill="#c9c9c9"/>
 <rect x="166.400" y="3" width="7" height="8.400" fill="#e8eefb" stroke="#9db1dc" stroke-width=".7"/><path d="M168 5l1.800 2.200-1.800 2.200" stroke="#5d7fc2" stroke-width=".8" fill="none"/>
 <rect x="174.600" y="2.600" width="1.800" height="6" fill="#0b3f9c"/><rect x="174.600" y="9.600" width="1.800" height="1.800" fill="#0b3f9c"/>
 <rect x="181" y="1.500" width="1" height="12.500" fill="#c9c9c9"/>
 <rect x="196.600" y="3" width="6.600" height="8.400" fill="#e8eefb" stroke="#9db1dc" stroke-width=".7"/><path d="M198 5l1.800 2.200-1.800 2.200" stroke="#5d7fc2" stroke-width=".8" fill="none"/><path d="M204.600 2.600v9h-1.200" stroke="#0b3f9c" stroke-width="1" fill="none"/>
 <rect x="210.600" y="3" width="6.600" height="8.400" fill="#e8eefb" stroke="#9db1dc" stroke-width=".7"/><path d="M212 5l1.800 2.200-1.800 2.200" stroke="#5d7fc2" stroke-width=".8" fill="none"/><path d="M218.600 7v4.600" stroke="#0b3f9c" stroke-width="1.200" fill="none"/>
 <rect x="225" y="3" width="6.600" height="8.400" fill="#e8eefb" stroke="#9db1dc" stroke-width=".7"/><path d="M226.400 5l1.800 2.200-1.800 2.200" stroke="#5d7fc2" stroke-width=".8" fill="none"/><rect x="231.600" y="5" width="2.600" height="2.200" fill="#3a62b8"/>
 <path d="M242.400 3.200c-1.200 0-1.200.6-1.200 1.600s0 1.800-1 2c1 .2 1 1 1 2s0 1.600 1.200 1.600M246.600 3.200c1.200 0 1.200.6 1.200 1.600s0 1.800 1 2c-1 .2-1 1-1 2s0 1.600-1.200 1.600M243.200 6.600h2.600M244.500 5.300v2.600M250.200 8.400v.8M250.200 10.200v1.400" fill="none" stroke="#6e6e6e" stroke-width=".8"/>
 <rect x="252.600" y="1.500" width="1" height="12.500" fill="#c9c9c9"/>
</svg>
<div style="left:275px;top:72px;width:572px;height:379.500px;background:#fff;border:1.500px solid #8f8f8f;border-right:1px solid #ececec;border-top:1.500px solid #9a9a9a"></div>
<div style="left:276.500px;top:73.500px;width:8.500px;height:367px;background:#f3f3f3;border-right:1px solid #d0d0d0"></div>
<div style="left:298.500px;top:73.500px;width:1px;height:367px;background:#d8d8d8"></div>
<div style="left:276.500px;top:73.500px;width:7.500px;height:10.500px;background:#b4b4b4"></div>
<svg style="left:276px;top:74px" width="8" height="10" viewBox="0 0 8 10"><path d="M.8 3.800h3.400V1.800L7.400 5 4.200 8.200V6.200H.8z" fill="#f3e41a" stroke="#6b6400" stroke-width=".5"/></svg>
<div style="left:313px;top:73.500px;width:533px;height:10.500px;background:#f0f0f0"></div>
<div style="left:275.500px;top:73.500px;width:570.500px;height:367px;overflow:hidden">
<div class="ln" style="left:8px;top:1.5px;width:13.700px">1</div>
<div class="ln" style="left:8px;top:12.5px;width:13.700px">2</div>
<div class="code" style="left:37.800px;top:12.5px">Speed_filt = <b>FiltLpZ</b>(Speed_ms, <i>1</i>, <i>0</i>, <i>8</i>, <i>1</i> 'Hz') <u>; low-pass filter without phase shift</u></div>
<div class="ln" style="left:8px;top:23.5px;width:13.700px">3</div>
<div class="code" style="left:37.800px;top:23.5px">Accel = <b>diff</b>(Speed_filt) <u>; differentiate speed to get acceleration</u></div>
<div class="ln" style="left:8px;top:34.5px;width:13.700px">4</div>
<div class="code" style="left:37.800px;top:34.5px">Speed_mph = <b>ConvertUnit</b>(Speed_ms, <i>"mph"</i>) <u>; rescale to mph</u></div>
<div class="ln" style="left:8px;top:45.5px;width:13.700px">5</div>
<div class="ln" style="left:8px;top:56.5px;width:13.700px">6</div>
<div class="code" style="left:37.800px;top:56.5px"><u>; locate intervals of positive acceleration</u></div>
<div class="ln" style="left:8px;top:67.5px;width:13.700px">7</div>
<div class="code" style="left:37.800px;top:67.5px">Intervals = <b>IntervalFrom2Levels</b>(Accel, <i>0.1</i> 'm/s²', <i>1</i>, <i>0.1</i> 'm/s²', <i>4</i>)</div>
<div class="ln" style="left:8px;top:78.5px;width:13.700px">8</div>
<div class="code" style="left:37.800px;top:78.5px">Slopes = <b>IntervalGetStatist</b>(Speed_ms, Intervals, <i>""</i>, <i>"lfit coeff1"</i>) <u>; get averaged accelerations for intervals</u></div>
<div class="ln" style="left:8px;top:89.5px;width:13.700px">9</div>
<div class="code" style="left:37.800px;top:89.5px">Sections = <b>IntervalGetSections</b>(Speed_mph, Intervals, <i>""</i>, <i>0</i>) <u>; cut out time sections for intervals</u></div>
<div class="ln" style="left:8px;top:100.5px;width:13.700px">10</div>
</div>
<div style="left:276.500px;top:440.500px;width:569.500px;height:9.500px;background:#f0f0f0"></div>
<svg style="left:277px;top:441px" width="8" height="9" viewBox="0 0 8 9"><path d="M5 2L2.400 4.600 5 7.200" fill="none" stroke="#c2c2c2" stroke-width=".9"/></svg>
<!-- HELP PANEL -->
<div style="left:274px;top:455.500px;width:573px;height:203px;background:#fff;border:1px solid #d6d6d6;border-right-color:#ececec"></div>
<div style="left:274px;top:455.500px;width:573px;height:14.500px;background:#f8f8f8;border:1px solid #dcdcdc;border-right-color:#ececec"></div>
<div style="top:459px;font-size:7.6px;line-height:10px;letter-spacing:-0.242px;white-space:nowrap;left:282.5px;font-weight:bold;color:#adadad;">Help</div>
<div style="left:275px;top:470px;width:571.500px;height:170.500px;overflow:hidden;background:#fff">
<div style="top:10px;font-size:7.9px;line-height:10px;letter-spacing:-0.049px;white-space:nowrap;left:6.5px;font-weight:bold;"><span style="color:#1a5fb4">IntervalGetSections</span>(input data, Interval data, Interval format [, Interpolation] [, StartInterval] [, IntervalCount] [, IntervalStep]) -&gt; Result</div>
<div style="top:26px;font-size:7.3px;line-height:10px;letter-spacing:-0.199px;white-space:nowrap;left:6.5px;">The corresponding sections are extracted from the intervals of a data set. This creates a group containing the resulting data sets.</div>
<div style="top:42px;font-size:7.9px;line-height:10px;letter-spacing:-0.138px;white-space:nowrap;left:6.5px;font-weight:bold;">Parameter:</div>
<div style="top:51px;font-size:7.3px;line-height:10px;letter-spacing:-0.099px;white-space:nowrap;left:6.5px;">input data<span>:</span></div>
<div style="top:51px;font-size:7.3px;line-height:10px;letter-spacing:-0.224px;white-space:nowrap;left:55.69999999999999px;">Input data; equidistant or XY with X monotonic</div>
<div style="top:60px;font-size:7.3px;line-height:10px;letter-spacing:-0.014px;white-space:nowrap;left:6.5px;">Interval data<span>:</span></div>
<div style="top:60px;font-size:7.3px;line-height:10px;letter-spacing:-0.09px;white-space:nowrap;left:55.69999999999999px;">Interval data</div>
<div style="top:69px;font-size:7.3px;line-height:10px;letter-spacing:-0.2px;white-space:nowrap;left:6.5px;">Interval</div>
<div style="top:69px;font-size:7.3px;line-height:10px;letter-spacing:-0.153px;white-space:nowrap;left:55.69999999999999px;">Interpretation of the interval data<span>:</span> Are the intervals to be interpreted as X-positions or as parameters? The latter is important if the input data are of the type XY.</div>
<div style="top:77px;font-size:7.3px;line-height:10px;letter-spacing:-0.2px;white-space:nowrap;left:6.5px;">format:</div>
<div style="top:88px;font-size:7.6px;line-height:10px;letter-spacing:-0.1px;white-space:nowrap;left:56.69999999999999px;font-weight:bold;"><span style="color:#c21fc2">""</span><span style="font-weight:normal">:</span></div>
<div style="top:88px;font-size:7.3px;line-height:10px;letter-spacing:-0.205px;white-space:nowrap;left:110px;">automatic: With equidistant input data and with XY-input data having a monotonic X-track, the interval data represent X-positions. Otherwise they are interpreted as parameters</div>
<div style="top:96px;font-size:7.3px;line-height:10px;letter-spacing:-0.348px;white-space:nowrap;left:110px;">sometimes monotonic and sometimes not.</div>
<div style="top:105px;font-size:7.6px;line-height:10px;letter-spacing:-0.1px;white-space:nowrap;left:56.69999999999999px;font-weight:bold;"><span style="color:#c21fc2">"equi"</span><span style="font-weight:normal">:</span></div>
<div style="top:105px;font-size:7.3px;line-height:10px;letter-spacing:-0.167px;white-space:nowrap;left:110px;">equidistant. Only for equidistant input data</div>
<div style="top:115px;font-size:7.6px;line-height:10px;letter-spacing:-0.1px;white-space:nowrap;left:56.69999999999999px;font-weight:bold;"><span style="color:#c21fc2">"xy"</span><span style="font-weight:normal">:</span></div>
<div style="top:115px;font-size:7.3px;line-height:10px;letter-spacing:-0.202px;white-space:nowrap;left:110px;">XY-pairs, interval-code with time stamp. Only for equidistante input data or XY-input data with monotonic time track.</div>
<div style="top:124px;font-size:7.6px;line-height:10px;letter-spacing:-0.1px;white-space:nowrap;left:56.69999999999999px;font-weight:bold;"><span style="color:#c21fc2">"para</span></div>
<div style="top:124px;font-size:7.3px;line-height:10px;letter-spacing:-0.17px;white-space:nowrap;left:110px;">Equidistant data set with interval-code plotted over the parameter of the two-component data</div>
<div style="top:132px;font-size:7.6px;line-height:10px;letter-spacing:-0.1px;white-space:nowrap;left:56.69999999999999px;font-weight:bold;"><span style="color:#c21fc2">equi"</span><span style="font-weight:normal">:</span></div>
<div style="top:141px;font-size:7.6px;line-height:10px;letter-spacing:-0.1px;white-space:nowrap;left:56.69999999999999px;font-weight:bold;"><span style="color:#c21fc2">"para xy"</span><span style="font-weight:normal">:</span></div>
<div style="top:141px;font-size:7.3px;line-height:10px;letter-spacing:-0.208px;white-space:nowrap;left:110px;">XY-data set with interval code and value of the 2-component-data's parameter</div>
<div style="top:152px;font-size:7.3px;line-height:10px;letter-spacing:-0.057px;white-space:nowrap;left:6.5px;">Interpolation:</div>
<div style="top:152px;font-size:7.3px;line-height:10px;letter-spacing:-0.121px;white-space:nowrap;left:55.69999999999999px;">Interpolation at the boundaries &gt;= 1</div>
<div style="top:162px;font-size:7.3px;line-height:10px;letter-spacing:-0.2px;white-space:nowrap;left:56.69999999999999px;"><b>0</b>:</div>
<div style="top:162px;font-size:7.3px;line-height:10px;letter-spacing:-0.168px;white-space:nowrap;left:76px;">Without interpolation: Values at the boundaries are not interpolated. Only values from the input data set that lie within an interval are output. Equidistant input data</div>
</div>
<div style="left:275px;top:640.500px;width:571px;height:17.500px;background:#f4f4f4;border-top:1px solid #e0e0e0"></div>
<div style="left:310.500px;top:640px;width:25px;height:18px;background:#fdfdfd;border:1px solid #d4d4d4;border-top:none"></div>
<div style="left:377.500px;top:643px;width:1px;height:12px;background:#dcdcdc"></div>
<div style="top:645px;font-size:7.3px;line-height:10px;letter-spacing:-0.069px;white-space:nowrap;left:283px;">Output</div>
<div style="top:645px;font-size:7.3px;line-height:10px;letter-spacing:-0.453px;white-space:nowrap;left:316px;">Help</div>
<div style="top:645px;font-size:7.3px;line-height:10px;letter-spacing:-0.428px;white-space:nowrap;left:341px;">QuickView</div>
<!-- RIGHT: AI ASSISTANT -->
<div style="left:848px;top:40px;width:330px;height:619px;background:#fdfdfd;border:1px solid #d9d9d9"></div>
<div style="left:848px;top:40px;width:330px;height:16px;background:#f8f8f8;border:1px solid #dcdcdc"></div>
<div style="top:44px;font-size:7.6px;line-height:10px;letter-spacing:-0.053px;white-space:nowrap;left:856.6px;font-weight:bold;color:#111;">AI Assistant</div>
<svg style="left:1162px;top:44px" width="10" height="8" viewBox="0 0 10 8"><path d="M1 4h3M4 1.600v4.800M4.600 2.400h2.800v3.200H4.600M8.400 1.600v4.800" fill="none" stroke="#555" stroke-width=".8"/></svg>
<svg style="left:862px;top:73px" width="48" height="50" viewBox="0 0 48 50">
 <rect x="22" y="2.600" width="3.200" height="7" rx="1.600" fill="#0f3a63"/>
 <rect x="10.200" y="8" width="26.400" height="17.800" rx="4.200" fill="#0f3a63"/>
 <rect x="14" y="12" width="18.800" height="9.600" rx="1.600" fill="#fdfdfd"/>
 <circle cx="19.200" cy="16.800" r="1.900" fill="#0f3a63"/><circle cx="27.600" cy="16.800" r="1.900" fill="#0f3a63"/>
 <path d="M2.600 44.600c0-8 8-15.400 21-15.400s21 7.400 21 15.400c0 2-1.400 3-3.400 3H6c-2 0-3.400-1-3.400-3z" fill="#0f3a63"/>
 <circle cx="23.600" cy="38.200" r="8.300" fill="#fdfdfd"/>
 <circle cx="23.600" cy="38.200" r="4.900" fill="#0f3a63"/>
 <path d="M19.800 36.800a4 4 0 0 1 4-2.600" stroke="#fdfdfd" stroke-width="1" fill="none"/>
 <path d="M23.600 41.600l7.400 .2 0 5.800-5 0z" fill="#0f3a63"/>
 <path d="M25.600 43.300a5.300 5.300 0 0 0 3.300-4.300" stroke="#fdfdfd" stroke-width="1.500" fill="none"/>
</svg>
<div style="top:139px;font-size:8.5px;line-height:11px;letter-spacing:-0.181px;white-space:nowrap;left:855.5px;color:#2a2a2a;">Hi! I'm your FAMOS AI Assistant. How can I help you today?</div>
<div style="left:1181px;top:40px;width:19px;height:65px;background:#e4eefa"></div>
<svg style="left:1184px;top:49px" width="14" height="11" viewBox="0 0 14 11"><path d="M2.200 1.800h3.600a2 2 0 0 1 2 2v2a2 2 0 0 1-2 2H4.200l-2 1.800z" fill="none" stroke="#1d5fa0" stroke-width=".9"/><ellipse cx="10.200" cy="5.400" rx="2" ry="2.700" fill="none" stroke="#1d5fa0" stroke-width=".9"/></svg>
<div style="left:1195px;top:62px;transform-origin:0 0;transform:rotate(90deg);color:#1a4f8f;font-size:7.500px;line-height:10px;letter-spacing:-0.3px;white-space:nowrap">AI Assistant</div>
<div style="left:849.500px;top:599.500px;width:327.500px;height:1.500px;background:#1b4a7a"></div>
<svg style="left:849px;top:601px" width="90" height="13" viewBox="0 0 90 13">
 <circle cx="5.600" cy="6.200" r="3.900" fill="none" stroke="#222" stroke-width=".8"/><path d="M5.600 3.800v2.600l1.600 1" fill="none" stroke="#222" stroke-width=".8"/>
 <path d="M12.600 5.800h2.800l-1.400 1.600z" fill="#222"/>
 <path d="M27.600 4h4.800a1.600 1.600 0 0 1 1.600 1.600v1.400a1.600 1.600 0 0 1-1.600 1.600h-2.600l-1.600 1.600v-1.600h-.6a1.600 1.600 0 0 1-1.600-1.600V5.600a1.600 1.600 0 0 1 1.600-1.600z" fill="none" stroke="#1b4a7a" stroke-width=".9"/>
 <path d="M35.400 1.600l.6 1.400 1.400.6-1.400.6-.6 1.400-.6-1.400-1.400-.6 1.400-.6z" fill="#1b4a7a"/>
 <path d="M49.600 3h5a1.500 1.500 0 0 1 1.500 1.500v1.400a1.500 1.500 0 0 1-1.500 1.500h-3l-1.400 1.400v-1.400h-.6" fill="none" stroke="#1b4a7a" stroke-width=".8"/>
 <path d="M47 5h4.600a1.500 1.500 0 0 1 1.500 1.500v1.400a1.500 1.500 0 0 1-1.500 1.500h-2.400l-1.400 1.400v-1.400H47a1.500 1.500 0 0 1-1.500-1.500V6.500A1.500 1.500 0 0 1 47 5z" fill="#fdfdfd" stroke="#1b4a7a" stroke-width=".8"/>
 <path d="M58 5.800h2.800l-1.400 1.600z" fill="#222"/>
 <path d="M73.800 4.400h5.200l-.5 5.800h-4.200zM73 4.400h6.800M75 4.200V3h2.800v1.200M75.400 6v3M77.400 6v3" fill="none" stroke="#1b4a7a" stroke-width=".8"/>
</svg>
<div style="left:1125.500px;top:603px;width:9px;height:9px;background:#fff;border:1px solid #1b4a7a;border-radius:1px"></div>
<svg style="left:1125.500px;top:603px" width="9" height="9" viewBox="0 0 9 9"><path d="M2 4.600l1.800 1.900L7.200 2.400" fill="none" stroke="#111" stroke-width="1"/></svg>
<div style="top:603px;font-size:7.3px;line-height:10px;letter-spacing:-0.268px;white-space:nowrap;left:1137px;">Attach code</div>
<div style="left:849px;top:615px;width:292.500px;height:43.500px;background:#fff;border:1px solid #b4b4b4;border-bottom-color:#c8c8c8;border-right-color:#c8c8c8"></div>
<div style="left:851px;top:617px;width:1px;height:9px;background:#222"></div>
<div style="top:617px;font-size:7.8px;line-height:10px;letter-spacing:-0.368px;white-space:nowrap;left:851.8px;color:#8a8a8a;font-family:'DejaVu Sans','Liberation Sans',sans-serif;">Please enter your question here!</div>
<div style="left:1131.500px;top:616.500px;width:9px;height:40.500px;background:#f1f1f1"></div>
<svg style="left:1131.500px;top:616.500px" width="9" height="41" viewBox="0 0 9 41"><path d="M2.800 5.600l1.700-1.800 1.700 1.800M2.800 35.400l1.700 1.800 1.700-1.800" fill="none" stroke="#b5b5b5" stroke-width=".9"/></svg>
<div style="left:1143px;top:615.500px;width:34px;height:42.500px;background:#f4f4f4"></div>
<svg style="left:1150px;top:628px" width="20" height="17" viewBox="0 0 20 17"><path d="M3 3.200l5 5.300-5 5.300M10 3.200l5 5.300-5 5.300" fill="none" stroke="#8d8d8d" stroke-width="2.200"/></svg>
<!-- STATUS BAR -->
<div style="top:663px;font-size:7.3px;line-height:10px;letter-spacing:-0.34px;white-space:nowrap;left:4.6px;">Ready</div>
<div style="top:663px;font-size:7.3px;line-height:10px;letter-spacing:-0.148px;white-space:nowrap;left:994.5px;">Line:1</div>
<div style="top:663px;font-size:7.3px;line-height:10px;letter-spacing:-0.38px;white-space:nowrap;left:1023.6px;">Column:1</div>
<div style="top:663px;font-size:7.3px;line-height:10px;letter-spacing:-0.906px;white-space:nowrap;left:1061.4px;color:#9a9a9a;">OVR</div>
<div style="top:663px;font-size:7.3px;line-height:10px;letter-spacing:-0.326px;white-space:nowrap;left:1084.5px;color:#9a9a9a;">R/O</div>
<div style="top:663px;font-size:7.3px;line-height:10px;letter-spacing:-0.945px;white-space:nowrap;left:1106.4px;color:#9a9a9a;">CAPS</div>
<div style="top:663px;font-size:7.3px;line-height:10px;letter-spacing:-0.875px;white-space:nowrap;left:1132.5px;">NUM</div>
<div style="top:663px;font-size:7.3px;line-height:10px;letter-spacing:-0.209px;white-space:nowrap;left:1159.5px;">Variables: 7</div>
<div style="left:1152px;top:661px;width:1px;height:12px;background:#d9d9d9"></div>
<!-- SLOPES WINDOW -->
<div style="left:273.5px;top:200px;width:184px;height:208.5px;background:#dfdfdf;border:1px solid #c9c9c9;border-radius:4.500px;box-shadow:0 7px 18px rgba(0,0,0,.27),0 0 2px rgba(0,0,0,.18);overflow:hidden">
<div style="left:0;top:0;width:184px;height:18px;background:#f3f3f3"></div>
<div style="left:0;top:18px;width:184px;height:15px;background:#ebebeb"></div>
<div style="left:0;top:33px;width:184px;height:15px;background:#fbfbfb;border-bottom:1px solid #dadada"></div>
</div>
<svg style="left:277.5px;top:203.5px" width="11" height="12" viewBox="0 0 11 12"><path d="M1.400 .6v10.200h9.200" fill="none" stroke="#222" stroke-width="1.100"/><path d="M2.400 10c1.600 0 2-1.600 2.400-4.200.3-2 .6-3 1.200-3s.9 1 1.200 3c.4 2.600.8 4.200 2.400 4.200z" fill="#e8d34a" stroke="#333" stroke-width=".7"/></svg>
<div style="top:205px;font-size:7.9px;line-height:10px;letter-spacing:-0.442px;white-space:nowrap;left:291.8px;color:#a0a0a0;">Slopes</div>
<svg style="left:379.5px;top:202.4px" width="70" height="13" viewBox="0 0 70 13"><path d="M3.200 6.600h6.400" stroke="#9a9a9a" stroke-width=".9"/><rect x="31.500" y="3.400" width="6" height="6" rx="1" fill="none" stroke="#8a8a8a" stroke-width=".9"/><path d="M60.200 3.400l6.200 6.200M66.400 3.400l-6.200 6.200" stroke="#8a8a8a" stroke-width=".9"/></svg>
<svg style="left:274.5px;top:219px" width="4" height="13" viewBox="0 0 4 13"><path d="M2.200 3v1M2.200 5.600v1M2.200 8.200v1" stroke="#9a9a9a" stroke-width="1"/></svg>
<div style="top:221px;font-size:8.2px;line-height:11px;letter-spacing:-0.428px;white-space:nowrap;left:284.7px;">File</div>
<div style="top:221px;font-size:8.2px;line-height:11px;letter-spacing:-0.032px;white-space:nowrap;left:305px;">Edit</div>
<div style="top:221px;font-size:8.2px;line-height:11px;letter-spacing:-0.306px;white-space:nowrap;left:327.7px;">Configuration</div>
<div style="top:221px;font-size:8.2px;line-height:11px;letter-spacing:-0.251px;white-space:nowrap;left:382px;">Options</div>
<div style="top:221px;font-size:8.2px;line-height:11px;letter-spacing:-0.406px;white-space:nowrap;left:417.5px;">Extras</div>
<svg style="left:273.5px;top:234.5px" width="184" height="13.200" viewBox="0 0 184 15" preserveAspectRatio="none">
<path d="M2.600 3.600v1M2.600 6.200v1M2.600 8.800v1" stroke="#9a9a9a" stroke-width="1"/>
<path d="M9.400 9.600V7.200a3.400 3.400 0 0 1 6.800 0v2.400" fill="none" stroke="#333" stroke-width="1"/><circle cx="10.400" cy="10" r="1.700" fill="#555"/><circle cx="15" cy="10" r="1.700" fill="#1d5fa0"/>
<path d="M23.400 3v9M28 3v9M21.600 5.400l1.800-2.400 1.800 2.400M26.200 5.400L28 3l1.800 2.400M21.400 8.400h8.800" fill="none" stroke="#1d5fa0" stroke-width="1.200"/>
<path d="M35.600 2.800h10M35.600 12.400h10M35.600 2.800v2.400M38.600 2.800v1.600M41.600 2.800v1.600M45.600 2.800v2.400" fill="none" stroke="#222" stroke-width=".9"/><path d="M36 8.400l2.400-2 2.400 1.800 2.400-1.600 2.400 1" fill="none" stroke="#1d5fa0" stroke-width=".9"/><path d="M36 10.600l3-1 3 1 3.600-1" fill="none" stroke="#1d5fa0" stroke-width=".7"/>
<rect x="49" y="2.500" width="1" height="10.500" fill="#bdbdbd"/>
<circle cx="58" cy="6.600" r="3.600" fill="none" stroke="#222" stroke-width="1.100"/><path d="M60.600 9.400l3.200 3.400" stroke="#222" stroke-width="1.500"/><path d="M56 6.600h4M58 4.600v4" stroke="#222" stroke-width="1"/>
<circle cx="72" cy="6.600" r="3.600" fill="none" stroke="#222" stroke-width="1.100"/><path d="M74.600 9.400l3.200 3.400" stroke="#222" stroke-width="1.500"/><path d="M67.400 11.800l9-9.400" stroke="#1d5fa0" stroke-width="1.100"/>
<path d="M83.400 2.400v10.400M81.800 11h10.600" stroke="#222" stroke-width=".9" fill="none"/><path d="M83.800 9.600l8-2.200v2.400h-8z" fill="#1d5fa0"/><path d="M84 8.400l7.600-2.600" stroke="#1aa08a" stroke-width="1"/>
<path d="M97.400 2.400v10.400M95.800 11h10.600" stroke="#222" stroke-width=".9" fill="none"/><path d="M97.800 10l4-3.600" stroke="#d23" stroke-width="1"/><path d="M101 7.400l5-1.800" stroke="#1aa08a" stroke-width="1"/>
<path d="M111.600 3v9.600M114.400 3v9.600M117.200 3v9.600M109.600 5h9.600M109.600 7.800h9.600M109.600 10.600h9.600" stroke="#1d5fa0" stroke-width=".9" fill="none"/>
<rect x="122.800" y="2.500" width="1" height="10.500" fill="#bdbdbd"/>
<rect x="128.400" y="3" width="5" height="6.400" fill="#eee" stroke="#222" stroke-width=".8"/><rect x="131.800" y="5" width="5" height="6.400" fill="#ddd" stroke="#222" stroke-width=".8"/>
<path d="M146.600 4.400h-4v7.200h7.200v-4" fill="none" stroke="#1d5fa0" stroke-width="1.100"/><path d="M145.600 8.400l5.400-5.400M147.600 2.600h3.800v3.800" fill="none" stroke="#1d5fa0" stroke-width="1.100"/>
<circle cx="161.600" cy="7.600" r="4.800" fill="#0b4c94"/><path d="M164.400 7.600h-5M161.400 5.200l-2.400 2.400 2.400 2.400" fill="none" stroke="#fff" stroke-width="1.300"/>
<path d="M169.400 6.800h3l-1.500 1.700z" fill="#111"/>
<circle cx="183" cy="7.600" r="4.600" fill="#b9b9b9"/><path d="M180.200 7.600h5M183.200 5.200l2.400 2.400-2.400 2.400" fill="none" stroke="#fff" stroke-width="1.300"/>
</svg>
<svg style="left:274.500px;top:249px" width="182" height="158" viewBox="274.500 249 182 158">
<rect x="304.600" y="263" width="142.600" height="118.700" fill="#eaeaea" stroke="#d2d2d2" stroke-width=".8"/>
<rect x="305.10" y="340.84" width="27.64" height="40.76" fill="#04468c"/>
<text x="318.87" y="339.44" text-anchor="middle" font-family="Liberation Sans,sans-serif" font-size="10.300" fill="#255a9e" letter-spacing="-.2">0.338</text>
<rect x="333.44" y="345.18" width="27.64" height="36.42" fill="#04468c"/>
<text x="347.21" y="343.78" text-anchor="middle" font-family="Liberation Sans,sans-serif" font-size="10.300" fill="#255a9e" letter-spacing="-.2">0.302</text>
<rect x="361.78" y="292.60" width="27.64" height="89.00" fill="#04468c"/>
<text x="375.55" y="291.20" text-anchor="middle" font-family="Liberation Sans,sans-serif" font-size="10.300" fill="#255a9e" letter-spacing="-.2">0.738</text>
<rect x="390.12" y="322.87" width="27.64" height="58.73" fill="#04468c"/>
<text x="403.89" y="321.47" text-anchor="middle" font-family="Liberation Sans,sans-serif" font-size="10.300" fill="#255a9e" letter-spacing="-.2">0.487</text>
<rect x="418.46" y="348.07" width="27.64" height="33.53" fill="#04468c"/>
<text x="432.23" y="346.67" text-anchor="middle" font-family="Liberation Sans,sans-serif" font-size="10.300" fill="#255a9e" letter-spacing="-.2">0.278</text>
<text x="275.800" y="256.700" font-family="Liberation Sans,sans-serif" font-size="6.800" fill="#5a5a5a" textLength="13.500">m/s²</text>
<text x="298" y="384.10" text-anchor="end" font-family="Liberation Sans,sans-serif" font-size="7" fill="#5a5a5a">0.0</text>
<path d="M298.900 381.60h3.200" stroke="#6a6a6a" stroke-width=".9"/>
<text x="298" y="372.04" text-anchor="end" font-family="Liberation Sans,sans-serif" font-size="7" fill="#5a5a5a">0.1</text>
<path d="M298.900 369.54h3.200" stroke="#6a6a6a" stroke-width=".9"/>
<text x="298" y="359.98" text-anchor="end" font-family="Liberation Sans,sans-serif" font-size="7" fill="#5a5a5a">0.2</text>
<path d="M298.900 357.48h3.200" stroke="#6a6a6a" stroke-width=".9"/>
<text x="298" y="347.92" text-anchor="end" font-family="Liberation Sans,sans-serif" font-size="7" fill="#5a5a5a">0.3</text>
<path d="M298.900 345.42h3.200" stroke="#6a6a6a" stroke-width=".9"/>
<text x="298" y="335.86" text-anchor="end" font-family="Liberation Sans,sans-serif" font-size="7" fill="#5a5a5a">0.4</text>
<path d="M298.900 333.36h3.200" stroke="#6a6a6a" stroke-width=".9"/>
<text x="298" y="323.80" text-anchor="end" font-family="Liberation Sans,sans-serif" font-size="7" fill="#5a5a5a">0.5</text>
<path d="M298.900 321.30h3.200" stroke="#6a6a6a" stroke-width=".9"/>
<text x="298" y="311.74" text-anchor="end" font-family="Liberation Sans,sans-serif" font-size="7" fill="#5a5a5a">0.6</text>
<path d="M298.900 309.24h3.200" stroke="#6a6a6a" stroke-width=".9"/>
<text x="298" y="299.68" text-anchor="end" font-family="Liberation Sans,sans-serif" font-size="7" fill="#5a5a5a">0.7</text>
<path d="M298.900 297.18h3.200" stroke="#6a6a6a" stroke-width=".9"/>
<text x="298" y="287.62" text-anchor="end" font-family="Liberation Sans,sans-serif" font-size="7" fill="#5a5a5a">0.8</text>
<path d="M298.900 285.12h3.200" stroke="#6a6a6a" stroke-width=".9"/>
<text x="298" y="275.56" text-anchor="end" font-family="Liberation Sans,sans-serif" font-size="7" fill="#5a5a5a">0.9</text>
<path d="M298.900 273.06h3.200" stroke="#6a6a6a" stroke-width=".9"/>
<path d="M305.00 384.700v3.400" stroke="#6a6a6a" stroke-width="1"/>
<text x="305.00" y="395.600" text-anchor="middle" font-family="Liberation Sans,sans-serif" font-size="7" fill="#5a5a5a">0</text>
<path d="M310.67 384.700v1.300" stroke="#6a6a6a" stroke-width="1"/>
<path d="M316.34 384.700v1.300" stroke="#6a6a6a" stroke-width="1"/>
<path d="M322.00 384.700v1.300" stroke="#6a6a6a" stroke-width="1"/>
<path d="M327.67 384.700v1.300" stroke="#6a6a6a" stroke-width="1"/>
<path d="M333.34 384.700v3.400" stroke="#6a6a6a" stroke-width="1"/>
<text x="333.34" y="395.600" text-anchor="middle" font-family="Liberation Sans,sans-serif" font-size="7" fill="#5a5a5a">1</text>
<path d="M339.01 384.700v1.300" stroke="#6a6a6a" stroke-width="1"/>
<path d="M344.68 384.700v1.300" stroke="#6a6a6a" stroke-width="1"/>
<path d="M350.34 384.700v1.300" stroke="#6a6a6a" stroke-width="1"/>
<path d="M356.01 384.700v1.300" stroke="#6a6a6a" stroke-width="1"/>
<path d="M361.68 384.700v3.400" stroke="#6a6a6a" stroke-width="1"/>
<text x="361.68" y="395.600" text-anchor="middle" font-family="Liberation Sans,sans-serif" font-size="7" fill="#5a5a5a">2</text>
<path d="M367.35 384.700v1.300" stroke="#6a6a6a" stroke-width="1"/>
<path d="M373.02 384.700v1.300" stroke="#6a6a6a" stroke-width="1"/>
<path d="M378.68 384.700v1.300" stroke="#6a6a6a" stroke-width="1"/>
<path d="M384.35 384.700v1.300" stroke="#6a6a6a" stroke-width="1"/>
<path d="M390.02 384.700v3.400" stroke="#6a6a6a" stroke-width="1"/>
<text x="390.02" y="395.600" text-anchor="middle" font-family="Liberation Sans,sans-serif" font-size="7" fill="#5a5a5a">3</text>
<path d="M395.69 384.700v1.300" stroke="#6a6a6a" stroke-width="1"/>
<path d="M401.36 384.700v1.300" stroke="#6a6a6a" stroke-width="1"/>
<path d="M407.02 384.700v1.300" stroke="#6a6a6a" stroke-width="1"/>
<path d="M412.69 384.700v1.300" stroke="#6a6a6a" stroke-width="1"/>
<path d="M418.36 384.700v3.400" stroke="#6a6a6a" stroke-width="1"/>
<text x="418.36" y="395.600" text-anchor="middle" font-family="Liberation Sans,sans-serif" font-size="7" fill="#5a5a5a">4</text>
<path d="M424.03 384.700v1.300" stroke="#6a6a6a" stroke-width="1"/>
<path d="M429.70 384.700v1.300" stroke="#6a6a6a" stroke-width="1"/>
<path d="M435.36 384.700v1.300" stroke="#6a6a6a" stroke-width="1"/>
<path d="M441.03 384.700v1.300" stroke="#6a6a6a" stroke-width="1"/>
<path d="M446.70 384.700v3.400" stroke="#6a6a6a" stroke-width="1"/>
<text x="446.70" y="395.600" text-anchor="middle" font-family="Liberation Sans,sans-serif" font-size="7" fill="#5a5a5a">5</text>
</svg>
<!-- SECTIONS WINDOW -->
<div style="left:459px;top:200px;width:447px;height:258.5px;background:#dfdfdf;border:1px solid #c9c9c9;border-radius:4.500px;box-shadow:0 7px 18px rgba(0,0,0,.27),0 0 2px rgba(0,0,0,.18);overflow:hidden">
<div style="left:0;top:0;width:447px;height:18px;background:#f3f3f3"></div>
<div style="left:0;top:18px;width:447px;height:15px;background:#ebebeb"></div>
<div style="left:0;top:33px;width:309.5px;height:15px;background:#fbfbfb;border-bottom:1px solid #dadada"></div>
<div style="left:309.5px;top:33px;width:137.5px;height:15px;background:#ebebeb;border-bottom:1px solid #d4d4d4"></div>
</div>
<svg style="left:463px;top:203.5px" width="11" height="12" viewBox="0 0 11 12"><path d="M1.400 .6v10.200h9.200" fill="none" stroke="#222" stroke-width="1.100"/><path d="M2.400 10c1.600 0 2-1.600 2.400-4.200.3-2 .6-3 1.200-3s.9 1 1.200 3c.4 2.600.8 4.200 2.400 4.200z" fill="#e8d34a" stroke="#333" stroke-width=".7"/></svg>
<div style="top:205px;font-size:7.9px;line-height:10px;letter-spacing:-0.344px;white-space:nowrap;left:478.3px;color:#a0a0a0;">Sections: Interval_1</div>
<svg style="left:828px;top:202.4px" width="70" height="13" viewBox="0 0 70 13"><path d="M3.200 6.600h6.400" stroke="#9a9a9a" stroke-width=".9"/><rect x="31.500" y="3.400" width="6" height="6" rx="1" fill="none" stroke="#8a8a8a" stroke-width=".9"/><path d="M60.200 3.400l6.200 6.200M66.400 3.400l-6.200 6.200" stroke="#8a8a8a" stroke-width=".9"/></svg>
<svg style="left:460px;top:219px" width="4" height="13" viewBox="0 0 4 13"><path d="M2.200 3v1M2.200 5.600v1M2.200 8.200v1" stroke="#9a9a9a" stroke-width="1"/></svg>
<div style="top:221px;font-size:8.2px;line-height:11px;letter-spacing:-0.428px;white-space:nowrap;left:471.5px;">File</div>
<div style="top:221px;font-size:8.2px;line-height:11px;letter-spacing:-0.032px;white-space:nowrap;left:491.5px;">Edit</div>
<div style="top:221px;font-size:8.2px;line-height:11px;letter-spacing:-0.29px;white-space:nowrap;left:514px;">Configuration</div>
<div style="top:221px;font-size:8.2px;line-height:11px;letter-spacing:-0.251px;white-space:nowrap;left:568.5px;">Options</div>
<div style="top:221px;font-size:8.2px;line-height:11px;letter-spacing:-0.373px;white-space:nowrap;left:604px;">Extras</div>
<svg style="left:459px;top:234.5px" width="320" height="13.200" viewBox="0 0 320 15" preserveAspectRatio="none">
<path d="M2.600 3.600v1M2.600 6.200v1M2.600 8.800v1" stroke="#9a9a9a" stroke-width="1"/>
<path d="M9.400 9.600V7.200a3.400 3.400 0 0 1 6.800 0v2.400" fill="none" stroke="#333" stroke-width="1"/><circle cx="10.400" cy="10" r="1.700" fill="#555"/><circle cx="15" cy="10" r="1.700" fill="#1d5fa0"/>
<path d="M23.400 3v9M28 3v9M21.600 5.400l1.800-2.400 1.800 2.400M26.200 5.400L28 3l1.800 2.400M21.400 8.400h8.800" fill="none" stroke="#1d5fa0" stroke-width="1.200"/>
<path d="M35.600 2.800h10M35.600 12.400h10M35.600 2.800v2.400M38.600 2.800v1.600M41.600 2.800v1.600M45.600 2.800v2.400" fill="none" stroke="#222" stroke-width=".9"/><path d="M36 8.400l2.400-2 2.400 1.800 2.400-1.600 2.400 1" fill="none" stroke="#1d5fa0" stroke-width=".9"/><path d="M36 10.600l3-1 3 1 3.600-1" fill="none" stroke="#1d5fa0" stroke-width=".7"/>
<rect x="49" y="2.500" width="1" height="10.500" fill="#bdbdbd"/>
<circle cx="58" cy="6.600" r="3.600" fill="none" stroke="#222" stroke-width="1.100"/><path d="M60.600 9.400l3.200 3.400" stroke="#222" stroke-width="1.500"/><path d="M56 6.600h4M58 4.600v4" stroke="#222" stroke-width="1"/>
<circle cx="72" cy="6.600" r="3.600" fill="none" stroke="#222" stroke-width="1.100"/><path d="M74.600 9.400l3.200 3.400" stroke="#222" stroke-width="1.500"/><path d="M67.400 11.800l9-9.400" stroke="#1d5fa0" stroke-width="1.100"/>
<path d="M83.400 2.400v10.400M81.800 11h10.600" stroke="#222" stroke-width=".9" fill="none"/><path d="M83.800 9.600l8-2.200v2.400h-8z" fill="#1d5fa0"/><path d="M84 8.400l7.600-2.600" stroke="#1aa08a" stroke-width="1"/>
<path d="M97.400 2.400v10.400M95.800 11h10.600" stroke="#222" stroke-width=".9" fill="none"/><path d="M97.800 10l4-3.600" stroke="#d23" stroke-width="1"/><path d="M101 7.400l5-1.800" stroke="#1aa08a" stroke-width="1"/>
<rect x="107.800" y=".700" width="13" height="13.300" fill="#dbe9fa" stroke="#4a90e2" stroke-width="1"/>
<path d="M111.600 3v9.600M114.400 3v9.600M117.200 3v9.600M109.600 5h9.600M109.600 7.800h9.600M109.600 10.600h9.600" stroke="#1d5fa0" stroke-width=".9" fill="none"/>
<rect x="122.800" y="2.500" width="1" height="10.500" fill="#bdbdbd"/>
<rect x="128.400" y="3" width="5" height="6.400" fill="#eee" stroke="#222" stroke-width=".8"/><rect x="131.800" y="5" width="5" height="6.400" fill="#ddd" stroke="#222" stroke-width=".8"/>
<path d="M146.600 4.400h-4v7.200h7.200v-4" fill="none" stroke="#1d5fa0" stroke-width="1.100"/><path d="M145.600 8.400l5.400-5.400M147.600 2.600h3.800v3.800" fill="none" stroke="#1d5fa0" stroke-width="1.100"/>
<circle cx="161.600" cy="7.600" r="4.800" fill="#0b4c94"/><path d="M164.400 7.600h-5M161.400 5.200l-2.400 2.400 2.400 2.400" fill="none" stroke="#fff" stroke-width="1.300"/>
<path d="M169.400 6.800h3l-1.500 1.700z" fill="#111"/>
<circle cx="183" cy="7.600" r="4.600" fill="#b9b9b9"/><path d="M180.200 7.600h5M183.200 5.200l2.400 2.400-2.400 2.400" fill="none" stroke="#fff" stroke-width="1.300"/>
<path d="M191.400 6.800h3l-1.500 1.700z" fill="#111"/>
<rect x="199.400" y="2.500" width="1" height="10.500" fill="#bdbdbd"/>
<path d="M204.600 2.600v10M203.400 11.400h10.400" stroke="#222" stroke-width=".9" fill="none"/><path d="M205.600 10l3.400-4 2 1.600 2.600-3" stroke="#1d5fa0" stroke-width=".9" fill="none"/>
<path d="M218.400 2.600v10M217.400 11.400h10.400" stroke="#222" stroke-width=".9" fill="none"/><path d="M220.400 11V7M222.800 11V4.400M225.200 11V6" stroke="#1d5fa0" stroke-width="1.500" fill="none"/>
<rect x="231.400" y="2.500" width="1" height="10.500" fill="#bdbdbd"/>
<path d="M238.400 3v8l2-1.800 1.400 3 1.200-.6-1.400-2.800 2.600-.2z" fill="#fff" stroke="#111" stroke-width=".8"/>
<path d="M248 3.600h4v6.800l-2 1.800-2-1.800z" fill="#f4f4f4" stroke="#222" stroke-width=".8"/><circle cx="254.400" cy="7" r="3.600" fill="#eaf1fb" stroke="#9cb6da" stroke-width=".7"/><rect x="253.800" y="6.200" width="1.200" height="2.600" fill="#2468c8"/><circle cx="254.400" cy="5" r=".7" fill="#2468c8"/>
<rect x="264.800" y="2.500" width="1" height="10.500" fill="#bdbdbd"/>
<path d="M273 3.200v9M273 4l6.800 3.600-6.800 3.600z" fill="none" stroke="#222" stroke-width=".9"/>
<path d="M270 7.600h7M271.2 4.800l4.600 5.600M271.2 10.400l4.600-5.600" stroke="#e07a1a" stroke-width=".8"/>
<path d="M286.5 3.200v9M286.5 4l6.800 3.600-6.800 3.600z" fill="none" stroke="#222" stroke-width=".9"/>
<path d="M283.5 7.600h7M284.7 4.800l4.600 5.600M284.7 10.400l4.600-5.600" stroke="#e07a1a" stroke-width=".8"/>
<path d="M300.5 3.200v9M300.5 4l6.800 3.600-6.800 3.600z" fill="none" stroke="#222" stroke-width=".9"/>
<path d="M300.5 4l6.800 3.600-6.800 3.600z" fill="#777"/>
<path d="M271 13.200h9" stroke="#e07a1a" stroke-width=".8"/><path d="M294.200 4.400l1.400 1.200-1.400 1.200M294.200 9.200l1.400 1.200-1.400 1.200" stroke="#e07a1a" stroke-width=".7" fill="none"/>
</svg>
<svg style="left:460.500px;top:249px" width="444.500" height="208" viewBox="460.500 249 444.500 208">
<rect x="462" y="251" width="442" height="20.500" fill="#e7e7e7" stroke="#cfcfcf" stroke-width=".8"/>
<path d="M464.5 256.300h15.500" stroke="#04468c" stroke-width="1.8"/>
<text x="483.0" y="258.900" font-family="Liberation Sans,sans-serif" font-size="7.300" fill="#555" textLength="58.700" lengthAdjust="spacing">Sections: Interval_1</text>
<path d="M552.1 256.300h15.500" stroke="#d6163c" stroke-width="1.8"/>
<text x="570.6" y="258.900" font-family="Liberation Sans,sans-serif" font-size="7.300" fill="#555" textLength="58.700" lengthAdjust="spacing">Sections: Interval_2</text>
<path d="M639.7 256.300h15.500" stroke="#f59a3a" stroke-width="1.5"/>
<text x="658.2" y="258.900" font-family="Liberation Sans,sans-serif" font-size="7.300" fill="#555" textLength="58.700" lengthAdjust="spacing">Sections: Interval_3</text>
<path d="M727.3 256.300h15.500" stroke="#3a62e8" stroke-width="1.8"/>
<text x="745.8" y="258.900" font-family="Liberation Sans,sans-serif" font-size="7.300" fill="#555" textLength="58.700" lengthAdjust="spacing">Sections: Interval_4</text>
<path d="M814.9 256.300h15.500" stroke="#14b4ee" stroke-width="1.8"/>
<text x="833.4" y="258.900" font-family="Liberation Sans,sans-serif" font-size="7.300" fill="#555" textLength="58.700" lengthAdjust="spacing">Sections: Interval_5</text>
<path d="M464.500 265h15.500" stroke="#17b84a" stroke-width="1.300"/><text x="483" y="267.600" font-family="Liberation Sans,sans-serif" font-size="7.300" fill="#555" textLength="35" lengthAdjust="spacing">Speed_mph</text>
<path d="M552.100 265h15.500" stroke="#ff14e6" stroke-width="1.300"/><text x="570.600" y="267.600" font-family="Liberation Sans,sans-serif" font-size="7.300" fill="#555" textLength="17.700" lengthAdjust="spacing">Accel</text>
<rect x="508.200" y="275.600" width="385.300" height="155" fill="#e8e8e8"/>
<path d="M520.26 275.600v155" stroke="#d8d8d8" stroke-width=".9"/>
<path d="M532.32 275.600v155" stroke="#d8d8d8" stroke-width=".9"/>
<path d="M544.37 275.600v155" stroke="#d8d8d8" stroke-width=".9"/>
<path d="M556.43 275.600v155" stroke="#d8d8d8" stroke-width=".9"/>
<path d="M580.55 275.600v155" stroke="#d8d8d8" stroke-width=".9"/>
<path d="M592.61 275.600v155" stroke="#d8d8d8" stroke-width=".9"/>
<path d="M604.66 275.600v155" stroke="#d8d8d8" stroke-width=".9"/>
<path d="M616.72 275.600v155" stroke="#d8d8d8" stroke-width=".9"/>
<path d="M640.84 275.600v155" stroke="#d8d8d8" stroke-width=".9"/>
<path d="M652.90 275.600v155" stroke="#d8d8d8" stroke-width=".9"/>
<path d="M664.95 275.600v155" stroke="#d8d8d8" stroke-width=".9"/>
<path d="M677.01 275.600v155" stroke="#d8d8d8" stroke-width=".9"/>
<path d="M701.13 275.600v155" stroke="#d8d8d8" stroke-width=".9"/>
<path d="M713.19 275.600v155" stroke="#d8d8d8" stroke-width=".9"/>
<path d="M725.24 275.600v155" stroke="#d8d8d8" stroke-width=".9"/>
<path d="M737.30 275.600v155" stroke="#d8d8d8" stroke-width=".9"/>
<path d="M761.42 275.600v155" stroke="#d8d8d8" stroke-width=".9"/>
<path d="M773.48 275.600v155" stroke="#d8d8d8" stroke-width=".9"/>
<path d="M785.53 275.600v155" stroke="#d8d8d8" stroke-width=".9"/>
<path d="M797.59 275.600v155" stroke="#d8d8d8" stroke-width=".9"/>
<path d="M821.71 275.600v155" stroke="#d8d8d8" stroke-width=".9"/>
<path d="M833.77 275.600v155" stroke="#d8d8d8" stroke-width=".9"/>
<path d="M845.82 275.600v155" stroke="#d8d8d8" stroke-width=".9"/>
<path d="M857.88 275.600v155" stroke="#d8d8d8" stroke-width=".9"/>
<path d="M882.00 275.600v155" stroke="#d8d8d8" stroke-width=".9"/>
<path d="M894.06 275.600v155" stroke="#d8d8d8" stroke-width=".9"/>
<path d="M568.49 275.600v155" stroke="#ababab" stroke-width="1"/>
<path d="M628.78 275.600v155" stroke="#ababab" stroke-width="1"/>
<path d="M689.07 275.600v155" stroke="#ababab" stroke-width="1"/>
<path d="M749.36 275.600v155" stroke="#ababab" stroke-width="1"/>
<path d="M809.65 275.600v155" stroke="#ababab" stroke-width="1"/>
<path d="M869.94 275.600v155" stroke="#ababab" stroke-width="1"/>
<path d="M508.200 280.4h385.300" stroke="#b4b4b4" stroke-width="1"/>
<path d="M508.200 303.4h385.300" stroke="#b4b4b4" stroke-width="1"/>
<path d="M508.200 327.4h385.300" stroke="#b4b4b4" stroke-width="1"/>
<path d="M508.200 365.3h385.300" stroke="#b4b4b4" stroke-width="1"/>
<path d="M508.200 389.4h385.300" stroke="#b4b4b4" stroke-width="1"/>
<path d="M508.200 413.1h385.300" stroke="#b4b4b4" stroke-width="1"/>
<path d="M508.200 275.600h385.300M508.200 353.200h385.300" stroke="#a8a8a8" stroke-width="1" fill="none"/>
<path d="M508.200 275.600v155" stroke="#b9b9b9" stroke-width="1.400"/>
<path d="M508.200 430.600h385.300" stroke="#f2f2f2" stroke-width="1"/>
<text x="501" y="282.9" text-anchor="end" font-family="Liberation Sans,sans-serif" font-size="7" fill="#5a5a5a">15</text>
<path d="M502.400 280.4h2.800" stroke="#6a6a6a" stroke-width=".9"/>
<text x="501" y="305.9" text-anchor="end" font-family="Liberation Sans,sans-serif" font-size="7" fill="#5a5a5a">10</text>
<path d="M502.400 303.4h2.800" stroke="#6a6a6a" stroke-width=".9"/>
<text x="501" y="329.9" text-anchor="end" font-family="Liberation Sans,sans-serif" font-size="7" fill="#5a5a5a">5</text>
<path d="M502.400 327.4h2.800" stroke="#6a6a6a" stroke-width=".9"/>
<text x="501" y="353.5" text-anchor="end" font-family="Liberation Sans,sans-serif" font-size="7" fill="#5a5a5a"></text>
<path d="M502.400 351h2.800" stroke="#6a6a6a" stroke-width=".9"/>
<text x="501" y="367.8" text-anchor="end" font-family="Liberation Sans,sans-serif" font-size="7" fill="#5a5a5a">0.5</text>
<path d="M502.400 365.3h2.800" stroke="#6a6a6a" stroke-width=".9"/>
<text x="501" y="391.9" text-anchor="end" font-family="Liberation Sans,sans-serif" font-size="7" fill="#5a5a5a">0.0</text>
<path d="M502.400 389.4h2.800" stroke="#6a6a6a" stroke-width=".9"/>
<text x="501" y="415.6" text-anchor="end" font-family="Liberation Sans,sans-serif" font-size="7" fill="#5a5a5a">-0.5</text>
<path d="M502.400 413.1h2.800" stroke="#6a6a6a" stroke-width=".9"/>
<text x="463" y="282.500" font-family="Liberation Sans,sans-serif" font-size="6.800" fill="#5a5a5a" textLength="12">mph</text>
<text x="463" y="360" font-family="Liberation Sans,sans-serif" font-size="6.800" fill="#5a5a5a" textLength="13.500">m/s²</text>
<path d="M508.20 432.800v3.200" stroke="#6a6a6a" stroke-width="1"/>
<text x="508.20" y="443.500" text-anchor="middle" font-family="Liberation Sans,sans-serif" font-size="7.300" fill="#555">0</text>
<path d="M520.26 433.600v1.200" stroke="#6a6a6a" stroke-width="1"/>
<path d="M532.32 433.600v1.200" stroke="#6a6a6a" stroke-width="1"/>
<path d="M544.37 433.600v1.200" stroke="#6a6a6a" stroke-width="1"/>
<path d="M556.43 433.600v1.200" stroke="#6a6a6a" stroke-width="1"/>
<path d="M568.49 432.800v3.200" stroke="#6a6a6a" stroke-width="1"/>
<text x="568.49" y="443.500" text-anchor="middle" font-family="Liberation Sans,sans-serif" font-size="7.300" fill="#555">20</text>
<path d="M580.55 433.600v1.200" stroke="#6a6a6a" stroke-width="1"/>
<path d="M592.61 433.600v1.200" stroke="#6a6a6a" stroke-width="1"/>
<path d="M604.66 433.600v1.200" stroke="#6a6a6a" stroke-width="1"/>
<path d="M616.72 433.600v1.200" stroke="#6a6a6a" stroke-width="1"/>
<path d="M628.78 432.800v3.200" stroke="#6a6a6a" stroke-width="1"/>
<text x="628.78" y="443.500" text-anchor="middle" font-family="Liberation Sans,sans-serif" font-size="7.300" fill="#555">40</text>
<path d="M640.84 433.600v1.200" stroke="#6a6a6a" stroke-width="1"/>
<path d="M652.90 433.600v1.200" stroke="#6a6a6a" stroke-width="1"/>
<path d="M664.95 433.600v1.200" stroke="#6a6a6a" stroke-width="1"/>
<path d="M677.01 433.600v1.200" stroke="#6a6a6a" stroke-width="1"/>
<path d="M689.07 432.800v3.200" stroke="#6a6a6a" stroke-width="1"/>
<text x="689.07" y="443.500" text-anchor="middle" font-family="Liberation Sans,sans-serif" font-size="7.300" fill="#555">60</text>
<path d="M701.13 433.600v1.200" stroke="#6a6a6a" stroke-width="1"/>
<path d="M713.19 433.600v1.200" stroke="#6a6a6a" stroke-width="1"/>
<path d="M725.24 433.600v1.200" stroke="#6a6a6a" stroke-width="1"/>
<path d="M737.30 433.600v1.200" stroke="#6a6a6a" stroke-width="1"/>
<path d="M749.36 432.800v3.200" stroke="#6a6a6a" stroke-width="1"/>
<text x="749.36" y="443.500" text-anchor="middle" font-family="Liberation Sans,sans-serif" font-size="7.300" fill="#555">80</text>
<path d="M761.42 433.600v1.200" stroke="#6a6a6a" stroke-width="1"/>
<path d="M773.48 433.600v1.200" stroke="#6a6a6a" stroke-width="1"/>
<path d="M785.53 433.600v1.200" stroke="#6a6a6a" stroke-width="1"/>
<path d="M797.59 433.600v1.200" stroke="#6a6a6a" stroke-width="1"/>
<path d="M809.65 432.800v3.200" stroke="#6a6a6a" stroke-width="1"/>
<text x="809.65" y="443.500" text-anchor="middle" font-family="Liberation Sans,sans-serif" font-size="7.300" fill="#555">100</text>
<path d="M821.71 433.600v1.200" stroke="#6a6a6a" stroke-width="1"/>
<path d="M833.77 433.600v1.200" stroke="#6a6a6a" stroke-width="1"/>
<path d="M845.82 433.600v1.200" stroke="#6a6a6a" stroke-width="1"/>
<path d="M857.88 433.600v1.200" stroke="#6a6a6a" stroke-width="1"/>
<path d="M869.94 432.800v3.200" stroke="#6a6a6a" stroke-width="1"/>
<text x="869.94" y="443.500" text-anchor="middle" font-family="Liberation Sans,sans-serif" font-size="7.300" fill="#555">120</text>
<path d="M882.00 433.600v1.200" stroke="#6a6a6a" stroke-width="1"/>
<text x="888.500" y="456" font-family="Liberation Sans,sans-serif" font-size="6.800" fill="#555">s</text>
<path d="M508.2 351.0 L515.7 351.0" fill="none" stroke="#17b84a" stroke-width="1.4" stroke-linejoin="round" stroke-linecap="round"/>
<path d="M573.9 284.3 L609.2 284.3 L630.0 334.6 L639.5 334.6" fill="none" stroke="#17b84a" stroke-width="1.4" stroke-linejoin="round" stroke-linecap="round"/>
<path d="M666.5 306.8 L690.2 306.8 L702.7 337.5 L711.4 337.5" fill="none" stroke="#17b84a" stroke-width="1.4" stroke-linejoin="round" stroke-linecap="round"/>
<path d="M735.5 276.5 L744.3 276.5 L763.0 330.0 L772.1 330.0" fill="none" stroke="#17b84a" stroke-width="1.4" stroke-linejoin="round" stroke-linecap="round"/>
<path d="M802.0 279.4 L822.4 279.4 L832.4 302.6 L840.7 302.6" fill="none" stroke="#17b84a" stroke-width="1.4" stroke-linejoin="round" stroke-linecap="round"/>
<path d="M847.3 297.6 L856.0 297.6 L880.2 351.0 L893.9 351.0" fill="none" stroke="#17b84a" stroke-width="1.4" stroke-linejoin="round" stroke-linecap="round"/>
<path d="M515.7 351.0 L573.9 284.3" fill="none" stroke="#04468c" stroke-width="2.2" stroke-linejoin="round" stroke-linecap="round"/>
<path d="M639.5 334.6 L666.5 306.8" fill="none" stroke="#d6163c" stroke-width="2.2" stroke-linejoin="round" stroke-linecap="round"/>
<path d="M711.4 337.5 L735.5 276.5" fill="none" stroke="#f59a3a" stroke-width="2" stroke-linejoin="round" stroke-linecap="round"/>
<path d="M772.1 330.0 L802.0 279.4" fill="none" stroke="#3a62e8" stroke-width="2.2" stroke-linejoin="round" stroke-linecap="round"/>
<path d="M840.7 302.6 L847.3 297.6" fill="none" stroke="#14b4ee" stroke-width="2.2" stroke-linejoin="round" stroke-linecap="round"/>
<path d="M508.2 389.4 L515.4 389.4 L517.0 373.3 L572.6 373.3 L574.2 389.4 L608.4 389.4 L610.4 421.9 L629.1 421.9 L631.2 389.4 L639.1 389.4 L640.8 375.4 L665.7 375.4 L667.4 389.4 L689.8 389.4 L691.9 425.7 L701.5 425.7 L703.5 389.4 L711.0 389.4 L712.7 355.0 L735.1 355.0 L736.8 389.4 L743.8 389.4 L746.3 429.8 L761.7 429.8 L764.2 389.4 L771.3 389.4 L773.4 366.6 L801.2 366.6 L802.9 389.4 L822.0 389.4 L824.1 425.2 L830.7 425.2 L832.8 389.4 L839.9 389.4 L841.5 376.6 L846.1 376.6 L847.8 389.4 L855.2 389.4 L857.3 419.8 L878.9 419.8 L881.0 389.4 L893.9 389.4" fill="none" stroke="#ff14e6" stroke-width="1.5" stroke-linejoin="round" stroke-linecap="round"/>
</svg>
</div>
</body>
</html>
